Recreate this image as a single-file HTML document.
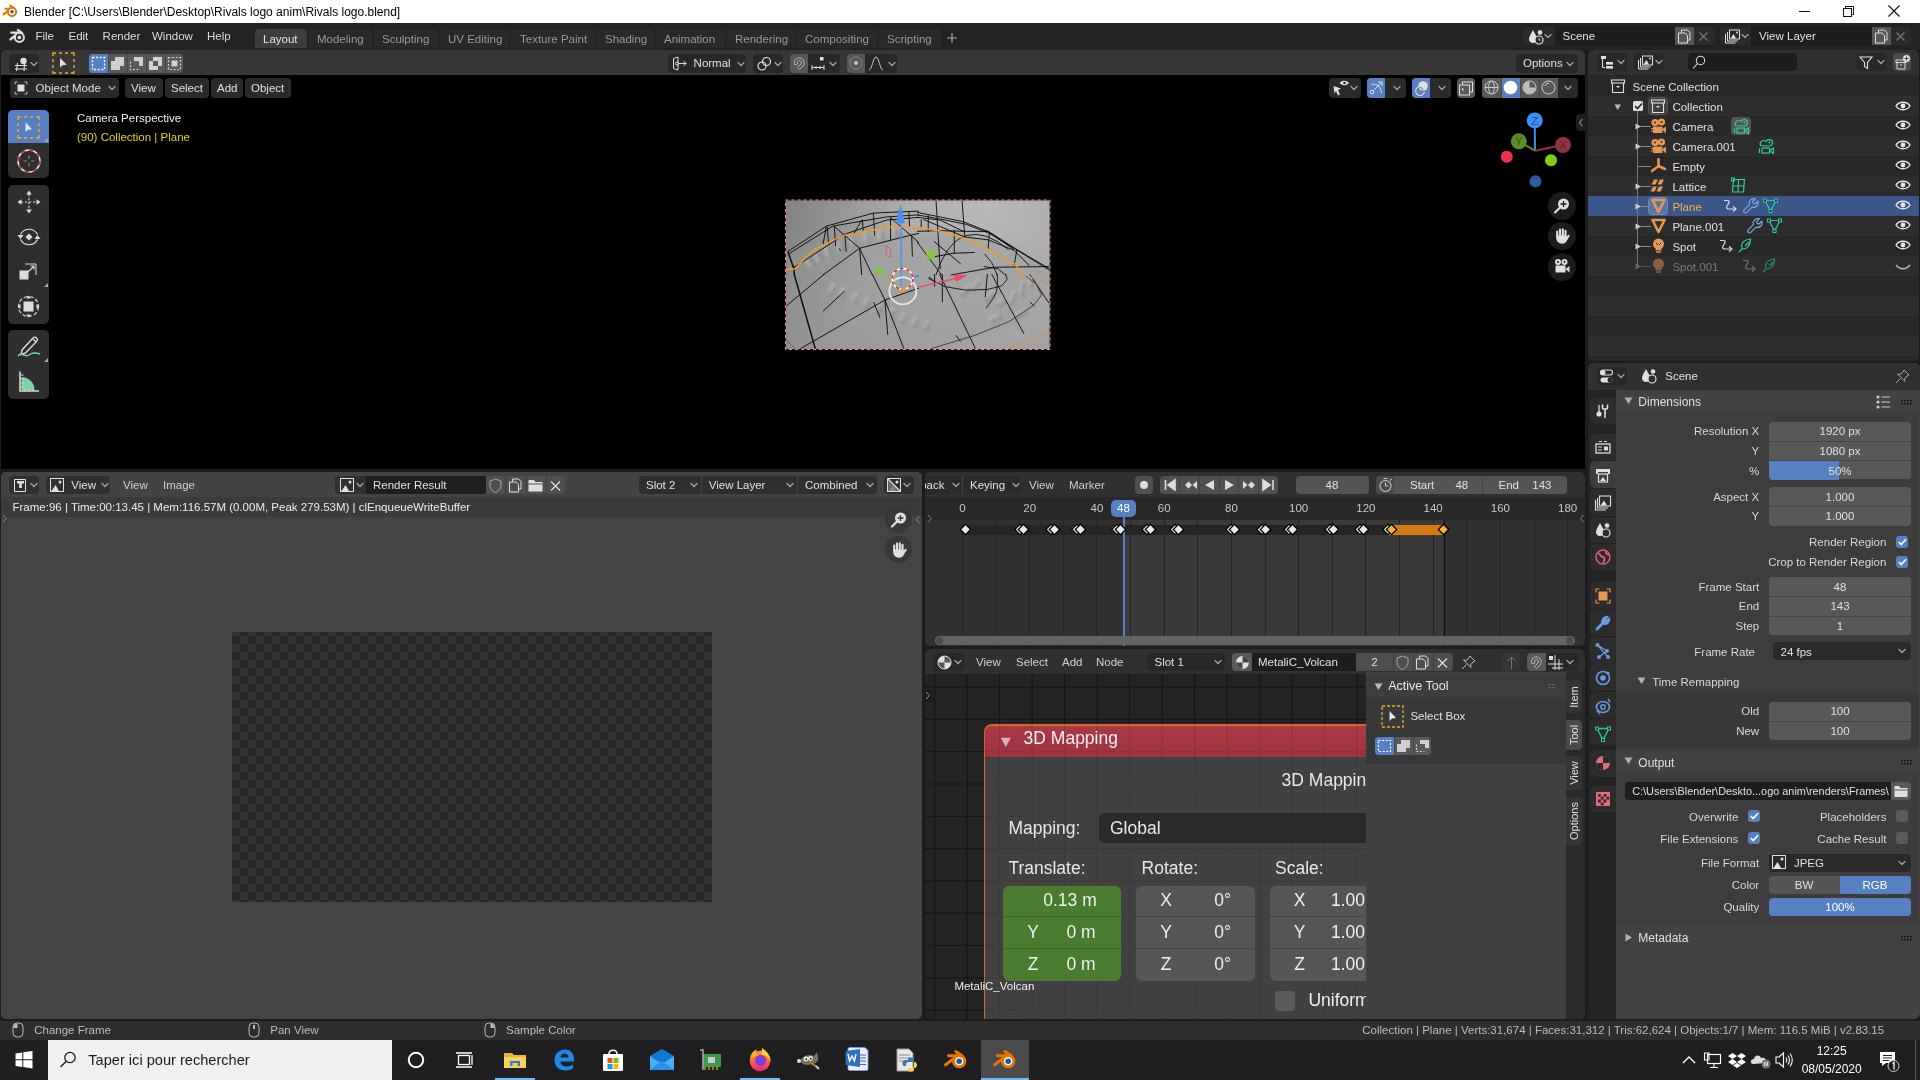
<!DOCTYPE html>
<html><head><meta charset="utf-8">
<style>
*{box-sizing:border-box}
html,body{margin:0;padding:0}
body{width:1920px;height:1080px;position:relative;overflow:hidden;background:#1c1c1c;font-family:"Liberation Sans",sans-serif;font-size:11.5px;color:#d8d8d8}
.a{position:absolute}
.t{position:absolute;white-space:nowrap}
svg{position:absolute;overflow:visible}
</style></head><body>
<div id="root" style="position:absolute;left:0;top:0;width:1920px;height:1080px;overflow:hidden;will-change:transform">
<!-- sec_rest -->
<div class="a" style="left:1px;top:50px;width:1584px;height:25px;background:#303030;border-radius:5px 5px 0 0;"></div>
<div class="a" style="left:1px;top:75px;width:1584px;height:394px;background:#000;"></div>
<div class="a" style="left:1px;top:472px;width:921px;height:547px;background:#444444;border-radius:5px;"></div>
<div class="a" style="left:925px;top:472px;width:660px;height:174px;background:#333;border-radius:5px;"></div>
<div class="a" style="left:925px;top:649px;width:660px;height:371px;background:#1d1d1d;border-radius:5px;"></div>
<div class="a" style="left:1588px;top:50px;width:331px;height:311px;background:#282828;border-radius:5px;"></div>
<div class="a" style="left:1588px;top:364px;width:331px;height:655px;background:#424242;border-radius:5px;"></div>
<div class="a" style="left:0px;top:1040px;width:1920px;height:40px;background:#1b1b1b;"></div>
<!-- sec_top -->
<div class="a" style="left:0px;top:0px;width:1920px;height:23px;background:#fff;"></div>
<svg style="left:0px;top:0px;" width="30" height="50" viewBox="0 0 30 50"><g stroke="#ea7600" stroke-linecap="round" fill="none"><path d="M10.2 5.6 L14.2 8.3" stroke-width="2.1"/><path d="M5.4 8.7 H11" stroke-width="2.1"/><path d="M3.5 14.4 L8.8 10.3" stroke-width="2.3"/><circle cx="12" cy="11.8" r="4.1" stroke-width="2.1"/></g><circle cx="12" cy="11.8" r="3" fill="#fff"/><circle cx="12" cy="11.8" r="1.7" fill="#265787"/></svg>
<div class="t" style="left:24px;top:4.73px;font-size:12px;line-height:15px;color:#000;">Blender [C:\Users\Blender\Desktop\Rivals logo anim\Rivals logo.blend]</div>
<div class="a" style="left:1799px;top:11px;width:11px;height:1px;background:#111;"></div>
<svg style="left:1842px;top:4px;" width="14" height="14" viewBox="0 0 14 14"><rect x="1.5" y="4.5" width="8" height="8" fill="none" stroke="#111" stroke-width="1"/><path d="M3.5 4.5 V2.5 H11.5 V10.5 H9.5" fill="none" stroke="#111" stroke-width="1"/></svg>
<svg style="left:1887px;top:4px;" width="14" height="14" viewBox="0 0 14 14"><path d="M1.5 1.5 L12.5 12.5 M12.5 1.5 L1.5 12.5" stroke="#111" stroke-width="1.1"/></svg>
<div class="a" style="left:0px;top:23px;width:1920px;height:27px;background:#232323;"></div>
<svg style="left:0px;top:0px;" width="30" height="50" viewBox="0 0 30 50"><g stroke="#e0e0e0" stroke-linecap="round" fill="none"><path d="M17.8 29.8 L22.2 33.2" stroke-width="2.2"/><path d="M11.3 32.7 H18" stroke-width="2.2"/><path d="M10.6 39.3 L15.6 35.2" stroke-width="2.4"/><circle cx="19.4" cy="37.4" r="4.4" stroke-width="2.2"/></g><circle cx="19.4" cy="37.4" r="3.3" fill="#232323"/><circle cx="19.4" cy="37.4" r="1.9" fill="#e0e0e0"/></svg>
<div class="t" style="left:35.4px;top:29.40px;font-size:11.5px;line-height:14px;color:#dcdcdc;">File</div>
<div class="t" style="left:68.5px;top:29.40px;font-size:11.5px;line-height:14px;color:#dcdcdc;">Edit</div>
<div class="t" style="left:102.6px;top:29.40px;font-size:11.5px;line-height:14px;color:#dcdcdc;">Render</div>
<div class="t" style="left:152px;top:29.40px;font-size:11.5px;line-height:14px;color:#dcdcdc;">Window</div>
<div class="t" style="left:207px;top:29.40px;font-size:11.5px;line-height:14px;color:#dcdcdc;">Help</div>
<div class="a" style="left:255px;top:29px;width:52px;height:19px;background:#3d3d3d;border-radius:4px 4px 0 0;"></div>
<div class="t" style="left:263px;top:32.20px;font-size:11.5px;line-height:14px;color:#e6e6e6;">Layout</div>
<div class="a" style="left:309px;top:29px;width:63px;height:19px;background:#292929;border-radius:4px 4px 0 0;"></div>
<div class="t" style="left:317px;top:32.20px;font-size:11.5px;line-height:14px;color:#9a9a9a;">Modeling</div>
<div class="a" style="left:374px;top:29px;width:64px;height:19px;background:#292929;border-radius:4px 4px 0 0;"></div>
<div class="t" style="left:382px;top:32.20px;font-size:11.5px;line-height:14px;color:#9a9a9a;">Sculpting</div>
<div class="a" style="left:440px;top:29px;width:69px;height:19px;background:#292929;border-radius:4px 4px 0 0;"></div>
<div class="t" style="left:448px;top:32.20px;font-size:11.5px;line-height:14px;color:#9a9a9a;">UV Editing</div>
<div class="a" style="left:511px;top:29px;width:83.5px;height:19px;background:#292929;border-radius:4px 4px 0 0;"></div>
<div class="t" style="left:520px;top:32.20px;font-size:11.5px;line-height:14px;color:#9a9a9a;">Texture Paint</div>
<div class="a" style="left:596.75px;top:29px;width:57.0px;height:19px;background:#292929;border-radius:4px 4px 0 0;"></div>
<div class="t" style="left:605px;top:32.20px;font-size:11.5px;line-height:14px;color:#9a9a9a;">Shading</div>
<div class="a" style="left:656px;top:29px;width:68.5px;height:19px;background:#292929;border-radius:4px 4px 0 0;"></div>
<div class="t" style="left:664px;top:32.20px;font-size:11.5px;line-height:14px;color:#9a9a9a;">Animation</div>
<div class="a" style="left:727px;top:29px;width:67.5px;height:19px;background:#292929;border-radius:4px 4px 0 0;"></div>
<div class="t" style="left:735px;top:32.20px;font-size:11.5px;line-height:14px;color:#9a9a9a;">Rendering</div>
<div class="a" style="left:797px;top:29px;width:79.75px;height:19px;background:#292929;border-radius:4px 4px 0 0;"></div>
<div class="t" style="left:805px;top:32.20px;font-size:11.5px;line-height:14px;color:#9a9a9a;">Compositing</div>
<div class="a" style="left:879px;top:29px;width:61.75px;height:19px;background:#292929;border-radius:4px 4px 0 0;"></div>
<div class="t" style="left:887px;top:32.20px;font-size:11.5px;line-height:14px;color:#9a9a9a;">Scripting</div>
<svg style="left:946px;top:32px;" width="12" height="12" viewBox="0 0 12 12"><path d="M6 1 V11 M1 6 H11" stroke="#aaa" stroke-width="1.2"/></svg>
<!-- sec_view3d -->
<div class="a" style="left:1px;top:50px;width:1584px;height:25px;background:#373737;border-radius:6px 6px 0 0;"></div>
<div class="a" style="left:9px;top:54px;width:30px;height:18.5px;background:#282828;border-radius:4px;"></div>
<svg style="left:13px;top:56px;" width="18" height="15" viewBox="0 0 18 15"><path d="M2 9.5 H14 M2 13 H14 M4.5 7 L3.5 15 M11.5 8 L11 15" stroke="#e0e0e0" stroke-width="1.1" fill="none"/><circle cx="10.5" cy="5" r="3.2" fill="#e0e0e0"/></svg>
<svg style="left:30px;top:61px;" width="8" height="6" viewBox="0 0 8 6"><path d="M1 1.5 L4 4.5 L7 1.5" fill="none" stroke="#a0a0a0" stroke-width="1.4" stroke-linecap="round" stroke-linejoin="round"/></svg>
<svg style="left:52px;top:52px;" width="23" height="22" viewBox="0 0 23 22"><path d="M1 4 V1 H4 M7 1 H10 M13 1 H16 M19 1 H22 V4 M22 7 V10 M22 13 V16 M22 19 V21 H19 M16 21 H13 M10 21 H7 M4 21 H1 V19 M1 16 V13 M1 10 V7" fill="none" stroke="#f5a623" stroke-width="1.4"/><path d="M8 6 V15.5 L10.5 13.3 L14.8 12.8 Z" fill="#e0e0e0"/></svg>
<div class="a" style="left:89px;top:54px;width:94px;height:18.5px;background:#595959;border-radius:4px;"></div>
<div class="a" style="left:89px;top:54px;width:19px;height:18.5px;background:#5680c2;border-radius:4px 0 0 4px;"></div>
<div class="a" style="left:107.5px;top:54px;width:1px;height:18.5px;background:#484848;"></div>
<div class="a" style="left:126.5px;top:54px;width:1px;height:18.5px;background:#484848;"></div>
<div class="a" style="left:145.5px;top:54px;width:1px;height:18.5px;background:#484848;"></div>
<div class="a" style="left:164.5px;top:54px;width:1px;height:18.5px;background:#484848;"></div>
<svg style="left:90px;top:55px;" width="17" height="17" viewBox="0 0 17 17"><rect x="2.5" y="2.5" width="12" height="12" fill="none" stroke="#fff" stroke-width="1.3" stroke-dasharray="2 1.6"/></svg>
<svg style="left:109px;top:55px;" width="17" height="17" viewBox="0 0 17 17"><path d="M6 2 H15 V11 H11 V15 H2 V6 H6 Z" fill="#d0d0d0"/></svg>
<svg style="left:128px;top:55px;" width="17" height="17" viewBox="0 0 17 17"><path d="M6 2 H15 V11 H11 V6 H6 Z" fill="#d0d0d0"/><path d="M2.5 6.5 V14.5 H10.5" fill="none" stroke="#d0d0d0" stroke-width="1.2" stroke-dasharray="2 1.5"/></svg>
<svg style="left:147px;top:55px;" width="17" height="17" viewBox="0 0 17 17"><path d="M6 2 H15 V11 H11 V6 H6 Z M2 6 H6 V11 H11 V15 H2 Z" fill="#d0d0d0"/></svg>
<svg style="left:166px;top:55px;" width="17" height="17" viewBox="0 0 17 17"><rect x="2.5" y="2.5" width="12" height="12" fill="none" stroke="#d0d0d0" stroke-width="1.2" stroke-dasharray="2 1.6"/><rect x="5.5" y="5.5" width="6" height="6" fill="#d0d0d0"/></svg>
<div class="a" style="left:668px;top:54px;width:78px;height:18.5px;background:#282828;border-radius:4px;"></div>
<svg style="left:671px;top:56px;" width="20" height="15" viewBox="0 0 20 15"><path d="M2.5 2.5 L7 1 V14 L2.5 12.5 Z" fill="none" stroke="#e0e0e0" stroke-width="1"/><circle cx="6" cy="7.5" r="1.6" fill="none" stroke="#e0e0e0" stroke-width="1"/><path d="M7.5 7.5 H15 M12.5 5 L15 7.5 L12.5 10" fill="none" stroke="#e0e0e0" stroke-width="1"/></svg>
<div class="t" style="left:693.6px;top:56.20px;font-size:11.5px;line-height:14px;color:#e0e0e0;">Normal</div>
<svg style="left:737px;top:61px;" width="8" height="6" viewBox="0 0 8 6"><path d="M1 1.5 L4 4.5 L7 1.5" fill="none" stroke="#a0a0a0" stroke-width="1.4" stroke-linecap="round" stroke-linejoin="round"/></svg>
<div class="a" style="left:753px;top:54px;width:30px;height:18.5px;background:#282828;border-radius:4px;"></div>
<svg style="left:756px;top:55px;" width="18" height="17" viewBox="0 0 18 17"><circle cx="6" cy="11" r="4" fill="none" stroke="#e0e0e0" stroke-width="1.2"/><circle cx="10.5" cy="6.5" r="4" fill="none" stroke="#e0e0e0" stroke-width="1.2"/></svg>
<svg style="left:774px;top:61px;" width="8" height="6" viewBox="0 0 8 6"><path d="M1 1.5 L4 4.5 L7 1.5" fill="none" stroke="#a0a0a0" stroke-width="1.4" stroke-linecap="round" stroke-linejoin="round"/></svg>
<div class="a" style="left:790px;top:54px;width:50px;height:18.5px;background:#282828;border-radius:4px;"></div>
<div class="a" style="left:790px;top:54px;width:18px;height:18.5px;background:#595959;border-radius:4px 0 0 4px;"></div>
<svg style="left:792px;top:56px;" width="15" height="15" viewBox="0 0 15 15"><path d="M3 9 C1 5 4 1.5 8 2 C12 2.5 13.5 7 11 10 L7.5 13.5 L5.5 11.5 L9 8 C10 6.5 9 4.5 7.5 4.5 C5.5 4.5 5 6.5 5.8 7.8 Z" fill="none" stroke="#b8b8b8" stroke-width="1"/></svg>
<svg style="left:810px;top:55px;" width="16" height="17" viewBox="0 0 16 17"><rect x="10" y="2" width="3.5" height="3.5" fill="#e0e0e0"/><path d="M2 10 V15 M14 10 V15 M2 12.5 H14 M6 11 V14 M10 11 V14" stroke="#e0e0e0" stroke-width="1" fill="none"/></svg>
<svg style="left:829px;top:61px;" width="8" height="6" viewBox="0 0 8 6"><path d="M1 1.5 L4 4.5 L7 1.5" fill="none" stroke="#a0a0a0" stroke-width="1.4" stroke-linecap="round" stroke-linejoin="round"/></svg>
<div class="a" style="left:847px;top:54px;width:50px;height:18.5px;background:#282828;border-radius:4px;"></div>
<div class="a" style="left:847px;top:54px;width:18px;height:18.5px;background:#595959;border-radius:4px 0 0 4px;"></div>
<svg style="left:848px;top:55px;" width="16" height="16" viewBox="0 0 16 16"><circle cx="8" cy="8" r="6" fill="none" stroke="#888" stroke-width="0.9"/><circle cx="8" cy="8" r="2" fill="#c8c8c8"/></svg>
<svg style="left:868px;top:55px;" width="16" height="17" viewBox="0 0 16 17"><path d="M1 15 C4 15 5 2 8 2 C11 2 12 15 15 15" fill="none" stroke="#c8c8c8" stroke-width="1"/></svg>
<svg style="left:888px;top:61px;" width="8" height="6" viewBox="0 0 8 6"><path d="M1 1.5 L4 4.5 L7 1.5" fill="none" stroke="#a0a0a0" stroke-width="1.4" stroke-linecap="round" stroke-linejoin="round"/></svg>
<div class="a" style="left:1516px;top:54px;width:61.5px;height:18.5px;background:#282828;border-radius:4px;"></div>
<div class="t" style="left:1523px;top:56.20px;font-size:11.5px;line-height:14px;color:#e0e0e0;">Options</div>
<svg style="left:1566px;top:61px;" width="8" height="6" viewBox="0 0 8 6"><path d="M1 1.5 L4 4.5 L7 1.5" fill="none" stroke="#a0a0a0" stroke-width="1.4" stroke-linecap="round" stroke-linejoin="round"/></svg>
<div class="a" style="left:1px;top:75px;width:1584px;height:394px;background:#000;"></div>
<div class="a" style="left:9.5px;top:78px;width:109.25px;height:19.5px;background:#2a2a2a;border-radius:4px;"></div>
<svg style="left:13px;top:80px;" width="18" height="16" viewBox="0 0 18 16"><path d="M2 4.5 V2 H4.5 M11.5 2 H14 V4.5 M14 11.5 V14 H11.5 M4.5 14 H2 V11.5" fill="none" stroke="#bbb" stroke-width="1"/><rect x="4.5" y="4.5" width="7" height="7" fill="#e0e0e0"/></svg>
<div class="t" style="left:35.6px;top:81.20px;font-size:11.5px;line-height:14px;color:#e0e0e0;">Object Mode</div>
<svg style="left:108px;top:85px;" width="8" height="6" viewBox="0 0 8 6"><path d="M1 1.5 L4 4.5 L7 1.5" fill="none" stroke="#a0a0a0" stroke-width="1.4" stroke-linecap="round" stroke-linejoin="round"/></svg>
<div class="a" style="left:125px;top:78px;width:37.5px;height:19.5px;background:#2a2a2a;border-radius:4px;"></div>
<div class="t" style="left:131px;top:81.20px;font-size:11.5px;line-height:14px;color:#e0e0e0;">View</div>
<div class="a" style="left:165px;top:78px;width:43.75px;height:19.5px;background:#2a2a2a;border-radius:4px;"></div>
<div class="t" style="left:171px;top:81.20px;font-size:11.5px;line-height:14px;color:#e0e0e0;">Select</div>
<div class="a" style="left:211px;top:78px;width:31.5px;height:19.5px;background:#2a2a2a;border-radius:4px;"></div>
<div class="t" style="left:217px;top:81.20px;font-size:11.5px;line-height:14px;color:#e0e0e0;">Add</div>
<div class="a" style="left:245px;top:78px;width:45.75px;height:19.5px;background:#2a2a2a;border-radius:4px;"></div>
<div class="t" style="left:251px;top:81.20px;font-size:11.5px;line-height:14px;color:#e0e0e0;">Object</div>
<div class="a" style="left:1329px;top:78px;width:32px;height:19.5px;background:#2a2a2a;border-radius:4px;"></div>
<svg style="left:1332px;top:80px;" width="18" height="16" viewBox="0 0 18 16"><path d="M8 2.5 C10.5 0 14.5 0 17 3 C14.5 6 10.5 6 8 3.5 Z" fill="#e0e0e0"/><circle cx="12.5" cy="3" r="1.3" fill="#2a2a2a"/><path d="M1.5 6 L9 8.5 L6 10 L8 14.5 L6 15.5 L4 11 L2.5 13.5 Z" fill="#e0e0e0"/></svg>
<svg style="left:1350px;top:85px;" width="8" height="6" viewBox="0 0 8 6"><path d="M1 1.5 L4 4.5 L7 1.5" fill="none" stroke="#a0a0a0" stroke-width="1.4" stroke-linecap="round" stroke-linejoin="round"/></svg>
<div class="a" style="left:1367px;top:78px;width:39px;height:19.5px;background:#2a2a2a;border-radius:4px;"></div>
<div class="a" style="left:1367px;top:78px;width:18px;height:19.5px;background:#5680c2;border-radius:4px 0 0 4px;"></div>
<svg style="left:1368px;top:79px;" width="17" height="17" viewBox="0 0 17 17"><path d="M3.5 5.5 C9 4 13 8 13.5 14" fill="none" stroke="#e0e0e0" stroke-width="1"/><circle cx="4" cy="13" r="1.8" fill="none" stroke="#e0e0e0" stroke-width="1"/><path d="M5.5 11.5 L14 3 M10 3 H14 V7" fill="none" stroke="#e0e0e0" stroke-width="1"/></svg>
<svg style="left:1393px;top:85px;" width="8" height="6" viewBox="0 0 8 6"><path d="M1 1.5 L4 4.5 L7 1.5" fill="none" stroke="#a0a0a0" stroke-width="1.4" stroke-linecap="round" stroke-linejoin="round"/></svg>
<div class="a" style="left:1412px;top:78px;width:39px;height:19.5px;background:#2a2a2a;border-radius:4px;"></div>
<div class="a" style="left:1412px;top:78px;width:18px;height:19.5px;background:#5680c2;border-radius:4px 0 0 4px;"></div>
<svg style="left:1413px;top:79px;" width="17" height="17" viewBox="0 0 17 17"><circle cx="10" cy="7" r="4.8" fill="#e0e0e0"/><path d="M5 8 A4.5 4.5 0 1 0 11.5 13" fill="none" stroke="#e0e0e0" stroke-width="1.1"/><circle cx="7.5" cy="10.5" r="2" fill="none" stroke="#5680c2" stroke-width="1"/></svg>
<svg style="left:1438px;top:85px;" width="8" height="6" viewBox="0 0 8 6"><path d="M1 1.5 L4 4.5 L7 1.5" fill="none" stroke="#a0a0a0" stroke-width="1.4" stroke-linecap="round" stroke-linejoin="round"/></svg>
<div class="a" style="left:1456.7px;top:78px;width:18.700000000000045px;height:19.5px;background:#595959;border-radius:4px;"></div>
<svg style="left:1458px;top:80px;" width="16" height="16" viewBox="0 0 16 16"><rect x="4.5" y="2" width="10" height="10" fill="none" stroke="#e0e0e0" stroke-width="1"/><rect x="1.5" y="5" width="10" height="10" fill="#595959" stroke="#e0e0e0" stroke-width="1"/><path d="M4.5 8 V10 H6" stroke="#e0e0e0" stroke-width="1" fill="none"/></svg>
<div class="a" style="left:1482px;top:78px;width:96px;height:19.5px;background:#2a2a2a;border-radius:4px;"></div>
<div class="a" style="left:1482px;top:78px;width:76px;height:19.5px;background:#595959;border-radius:4px 0 0 4px;"></div>
<div class="a" style="left:1501px;top:78px;width:18.5px;height:19.5px;background:#5680c2;"></div>
<div class="a" style="left:1500.5px;top:78px;width:1px;height:19.5px;background:#4a4a4a;"></div>
<div class="a" style="left:1519.5px;top:78px;width:1px;height:19.5px;background:#4a4a4a;"></div>
<div class="a" style="left:1538.5px;top:78px;width:1px;height:19.5px;background:#4a4a4a;"></div>
<svg style="left:1482px;top:79px;" width="19" height="17" viewBox="0 0 19 17"><circle cx="9.5" cy="8.5" r="6.5" fill="none" stroke="#ccc" stroke-width="1"/><ellipse cx="9.5" cy="8.5" rx="2.8" ry="6.5" fill="none" stroke="#ccc" stroke-width="1"/><path d="M3 8.5 H16" stroke="#ccc" stroke-width="1"/></svg>
<svg style="left:1501px;top:79px;" width="19" height="17" viewBox="0 0 19 17"><circle cx="9.5" cy="8.5" r="6.8" fill="#fff"/></svg>
<svg style="left:1520px;top:79px;" width="19" height="17" viewBox="0 0 19 17"><circle cx="9.5" cy="8.5" r="6.5" fill="none" stroke="#ccc" stroke-width="1"/><path d="M9.5 2 V8.5 H16 A6.5 6.5 0 0 1 9.5 15 A6.5 6.5 0 0 1 3 8.5 A6.5 6.5 0 0 1 9.5 2Z" fill="#bbb"/></svg>
<svg style="left:1539px;top:79px;" width="19" height="17" viewBox="0 0 19 17"><circle cx="9.5" cy="8.5" r="6.5" fill="none" stroke="#ccc" stroke-width="1"/><path d="M6 7 A4 4 0 0 1 10 4" fill="none" stroke="#ccc" stroke-width="1"/></svg>
<svg style="left:1564px;top:85px;" width="8" height="6" viewBox="0 0 8 6"><path d="M1 1.5 L4 4.5 L7 1.5" fill="none" stroke="#a0a0a0" stroke-width="1.4" stroke-linecap="round" stroke-linejoin="round"/></svg>
<div class="t" style="left:77px;top:110.90px;font-size:11.5px;line-height:14px;color:#f0f0f0;">Camera Perspective</div>
<div class="t" style="left:77px;top:130.20px;font-size:11.5px;line-height:14px;color:#e8d500;">(90) Collection | Plane</div>
<div class="a" style="left:8px;top:110px;width:41px;height:68px;background:#2e2e2e;border-radius:5px;"></div>
<div class="a" style="left:8px;top:185px;width:41px;height:139px;background:#2e2e2e;border-radius:5px;"></div>
<div class="a" style="left:8px;top:330px;width:41px;height:69px;background:#2e2e2e;border-radius:5px;"></div>
<div class="a" style="left:8px;top:110px;width:41px;height:33px;background:#5680c2;border-radius:5px 5px 0 0;"></div>
<svg style="left:17px;top:116px;" width="23" height="23" viewBox="0 0 23 23"><path d="M1 4 V1 H4 M7 1 H10 M13 1 H16 M19 1 H22 V4 M22 7 V10 M22 13 V16 M22 19 V22 H19 M16 22 H13 M10 22 H7 M4 22 H1 V19 M1 16 V13 M1 10 V7" fill="none" stroke="#f5a623" stroke-width="1.5"/><path d="M8.5 6.3 V16 L11 13.8 L15 13.2 Z" fill="#e8e8e8"/></svg>
<svg style="left:44px;top:138px;" width="4" height="4" viewBox="0 0 4 4"><path d="M4 0 V4 H0 Z" fill="#aaa"/></svg>
<svg style="left:16.5px;top:148.5px;" width="24" height="24" viewBox="0 0 24 24"><circle cx="12" cy="12" r="11" fill="none" stroke="#e8e8e8" stroke-width="1.5"/><circle cx="12" cy="12" r="11" fill="none" stroke="#c02828" stroke-width="1.6" stroke-dasharray="4.3 4.3"/><path d="M12 6.5 V10 M12 14 V17.5 M6.5 12 H10 M14 12 H17.5" stroke="#8a8a8a" stroke-width="1.2"/></svg>
<svg style="left:16.5px;top:190px;" width="24" height="24" viewBox="0 0 24 24"><path d="M12 4 V20 M4 12 H20" stroke="#ddd" stroke-width="1.1" stroke-dasharray="2.2 1.8"/><path d="M12 0.5 L9.2 4.5 H14.8 Z M12 23.5 L9.2 19.5 H14.8 Z M0.5 12 L4.5 9.2 V14.8 Z M23.5 12 L19.5 9.2 V14.8 Z" fill="#ddd"/></svg>
<svg style="left:16.5px;top:224.5px;" width="24" height="24" viewBox="0 0 24 24"><path d="M3.5 9.5 A9.5 9.5 0 0 1 20.5 9.5 M20.5 14.5 A9.5 9.5 0 0 1 3.5 14.5" fill="none" stroke="#ddd" stroke-width="1.2"/><path d="M12 8.5 L15.5 12 L12 15.5 L8.5 12 Z" fill="#ddd"/><path d="M0.5 10 H6.5 L3.5 14 Z M23.5 14 H17.5 L20.5 10 Z" fill="#ddd"/></svg>
<svg style="left:17px;top:261px;" width="22" height="22" viewBox="0 0 22 22"><rect x="2.5" y="9.5" width="9" height="9" fill="#ddd"/><path d="M8 3 H19 V14" fill="none" stroke="#ddd" stroke-width="1"/><path d="M11 11 L17 5 M13.5 5 H17 V8.5" fill="none" stroke="#ddd" stroke-width="1.2"/></svg>
<svg style="left:44px;top:283px;" width="4" height="4" viewBox="0 0 4 4"><path d="M4 0 V4 H0 Z" fill="#aaa"/></svg>
<svg style="left:17px;top:294.5px;" width="23" height="23" viewBox="0 0 23 23"><circle cx="11.5" cy="11.5" r="10" fill="none" stroke="#ddd" stroke-width="1.1" stroke-dasharray="4 2"/><rect x="6.5" y="6.5" width="10" height="10" fill="#ddd"/><path d="M11.5 0.5 L9 3.5 H14 Z M11.5 22.5 L9 19.5 H14 Z M0.5 11.5 L3.5 9 V14 Z M22.5 11.5 L19.5 9 V14 Z" fill="#ddd"/></svg>
<svg style="left:15.5px;top:334px;" width="26" height="26" viewBox="0 0 26 26"><path d="M6 16 L17 4 C18 3 19.5 3 20.5 4 C21.5 5 21.5 6.5 20.5 7.5 L9.5 19 L5 20.5 Z" fill="none" stroke="#ddd" stroke-width="1.4"/><path d="M17 5 L20 8" stroke="#ddd" stroke-width="1.2"/><path d="M2 22 C6 17 9 24 13 21 C16 19 18 18 24 20" fill="none" stroke="#7dd3a8" stroke-width="1.5"/></svg>
<svg style="left:44px;top:358px;" width="4" height="4" viewBox="0 0 4 4"><path d="M4 0 V4 H0 Z" fill="#aaa"/></svg>
<svg style="left:17px;top:370px;" width="23" height="23" viewBox="0 0 23 23"><path d="M3 1.5 V21 H22" fill="none" stroke="#ddd" stroke-width="1.6"/><path d="M4.5 20 V7 A13 13 0 0 1 17.5 20 Z" fill="#7dd3a8"/><path d="M4 17 H6.5 M4 13 H6.5 M4 9 H6.5 M4 5 H6.5 M8 19 V21 M12 19 V21 M16 19 V21" stroke="#ddd" stroke-width="1"/></svg>
<svg style="left:0px;top:0px;pointer-events:none" width="1920" height="1080" viewBox="0 0 1920 1080"><line x1="1535" y1="150.7" x2="1534.7" y2="120.4" stroke="#3d8ff5" stroke-width="2"/><line x1="1535" y1="150.7" x2="1518.8" y2="141.3" stroke="#5f8a28" stroke-width="2"/><line x1="1535" y1="150.7" x2="1563" y2="145" stroke="#8e3340" stroke-width="2"/><circle cx="1506.8" cy="156.7" r="6" fill="#f0304e"/><circle cx="1551" cy="160.3" r="6" fill="#7ed00e"/><circle cx="1535.5" cy="181.2" r="6" fill="#2c5c9b"/><circle cx="1518.8" cy="141.3" r="8" fill="#5f8a28"/><circle cx="1563" cy="145" r="8" fill="#8e3340"/><circle cx="1534.7" cy="120.4" r="8" fill="#3d8ff5"/><text x="1534.7" y="124.5" font-size="11" text-anchor="middle" fill="#1d4f8f" font-family="Liberation Sans">Z</text><text x="1518.8" y="145.4" font-size="11" text-anchor="middle" fill="#3d5a18" font-family="Liberation Sans">Y</text><text x="1563" y="149.1" font-size="11" text-anchor="middle" fill="#5e1f28" font-family="Liberation Sans">X</text></svg>
<div class="a" style="left:1548px;top:191.5px;width:28px;height:28px;background:#1c1c1c;border-radius:14px;"></div>
<div class="a" style="left:1548px;top:222px;width:28px;height:28px;background:#1c1c1c;border-radius:14px;"></div>
<div class="a" style="left:1548px;top:252.60000000000002px;width:28px;height:28px;background:#1c1c1c;border-radius:14px;"></div>
<svg style="left:1552px;top:196px;" width="20" height="20" viewBox="0 0 20 20"><circle cx="11.5" cy="8" r="5.5" fill="#e0e0e0"/><path d="M11.5 5 V11 M8.5 8 H14.5" stroke="#1c1c1c" stroke-width="1.3"/><path d="M7.5 12 L3 16.5" stroke="#e0e0e0" stroke-width="2.2" stroke-linecap="round"/></svg>
<svg style="left:1552px;top:226px;" width="20" height="20" viewBox="0 0 20 20"><path d="M5.2 10.5 V5.5 M8 10 V3.5 M10.8 10 V3.2 M13.5 10.5 V4.8" stroke="#e0e0e0" stroke-width="2.1" stroke-linecap="round"/><path d="M4.2 10 C4 13 4.5 16.5 8.5 17.5 C12 18.2 14 16.5 15 14.5 L17.6 10 C18 9.2 17 8.4 16.2 9 L14.5 10.8 V9.5 H4.2 Z" fill="#e0e0e0"/></svg>
<svg style="left:1552px;top:257px;" width="20" height="20" viewBox="0 0 20 20"><circle cx="6" cy="5" r="3" fill="#e0e0e0"/><circle cx="12.5" cy="5" r="3" fill="#e0e0e0"/><rect x="3.5" y="8.5" width="10" height="7" fill="#e0e0e0"/><path d="M13.5 12 L17.5 9 V15.5 Z" fill="#e0e0e0"/><circle cx="6" cy="5" r="1" fill="#1c1c1c"/><circle cx="12.5" cy="5" r="1" fill="#1c1c1c"/></svg>
<div class="a" style="left:1576px;top:114px;width:9px;height:17px;background:#1e1e1e;border-radius:4px 0 0 4px;"></div>
<svg style="left:1578px;top:118px;" width="6" height="9" viewBox="0 0 6 9"><path d="M4.5 1 L1.5 4.5 L4.5 8" fill="none" stroke="#999" stroke-width="1.1"/></svg>
<!-- sec_cam -->
<svg style="left:0px;top:0px;" width="1920" height="1080" viewBox="0 0 1920 1080"><defs>
<radialGradient id="bgg" cx="985" cy="205" r="260" gradientUnits="userSpaceOnUse">
<stop offset="0" stop-color="#b9b9b9"/><stop offset="0.5" stop-color="#a6a6a6"/><stop offset="1" stop-color="#8e8e8e"/></radialGradient>
<linearGradient id="lg2" x1="785" y1="200" x2="880" y2="260" gradientUnits="userSpaceOnUse"><stop offset="0" stop-color="#000" stop-opacity="0.16"/><stop offset="1" stop-color="#000" stop-opacity="0"/></linearGradient>
<clipPath id="fr"><rect x="785.5" y="200" width="264.5" height="149.5"/></clipPath>
<filter id="bl" x="-50%" y="-50%" width="200%" height="200%"><feGaussianBlur stdDeviation="3"/></filter>
<filter id="bl2" x="-50%" y="-50%" width="200%" height="200%"><feGaussianBlur stdDeviation="1.1"/></filter>
</defs><rect x="785.5" y="200" width="264.5" height="149.5" fill="url(#bgg)"/><rect x="785.5" y="200" width="264.5" height="149.5" fill="url(#lg2)"/><g clip-path="url(#fr)"><path d="M785.0 339.45 L787.81 252.48 C 840 240 900 228 960 232 C 1010 236 1045 262 1050 280 L 1041.56 295.11 C 1040 320 1000 335 950 342 L 870 350 L 785 350 Z" fill="#9a9a9a" opacity="0.45" filter="url(#bl)"/><g filter="url(#bl2)"><rect x="806.85" y="257.6" width="4.5" height="9" rx="1.5" transform="rotate(-35 810 263)" fill="#d2d2d2" opacity="0.55"/><rect x="808.65" y="259.4" width="4.5" height="9" rx="1.5" transform="rotate(-35 810 263)" fill="#5e5e5e" opacity="0.5"/><rect x="807.75" y="258.5" width="4.5" height="9" rx="1.5" transform="rotate(-35 810 263)" fill="#a8a8a8" opacity="0.7"/><rect x="814.85" y="252.6" width="4.5" height="9" rx="1.5" transform="rotate(-31 818 258)" fill="#d2d2d2" opacity="0.55"/><rect x="816.65" y="254.4" width="4.5" height="9" rx="1.5" transform="rotate(-31 818 258)" fill="#5e5e5e" opacity="0.5"/><rect x="815.75" y="253.5" width="4.5" height="9" rx="1.5" transform="rotate(-31 818 258)" fill="#a8a8a8" opacity="0.7"/><rect x="824.85" y="246.6" width="4.5" height="9" rx="1.5" transform="rotate(-27 828 252)" fill="#d2d2d2" opacity="0.55"/><rect x="826.65" y="248.4" width="4.5" height="9" rx="1.5" transform="rotate(-27 828 252)" fill="#5e5e5e" opacity="0.5"/><rect x="825.75" y="247.5" width="4.5" height="9" rx="1.5" transform="rotate(-27 828 252)" fill="#a8a8a8" opacity="0.7"/><rect x="836.85" y="241.6" width="4.5" height="9" rx="1.5" transform="rotate(-23 840 247)" fill="#d2d2d2" opacity="0.55"/><rect x="838.65" y="243.4" width="4.5" height="9" rx="1.5" transform="rotate(-23 840 247)" fill="#5e5e5e" opacity="0.5"/><rect x="837.75" y="242.5" width="4.5" height="9" rx="1.5" transform="rotate(-23 840 247)" fill="#a8a8a8" opacity="0.7"/><rect x="849.85" y="236.6" width="4.5" height="9" rx="1.5" transform="rotate(-19 853 242)" fill="#d2d2d2" opacity="0.55"/><rect x="851.65" y="238.4" width="4.5" height="9" rx="1.5" transform="rotate(-19 853 242)" fill="#5e5e5e" opacity="0.5"/><rect x="850.75" y="237.5" width="4.5" height="9" rx="1.5" transform="rotate(-19 853 242)" fill="#a8a8a8" opacity="0.7"/><rect x="863.85" y="232.6" width="4.5" height="9" rx="1.5" transform="rotate(-15 867 238)" fill="#d2d2d2" opacity="0.55"/><rect x="865.65" y="234.4" width="4.5" height="9" rx="1.5" transform="rotate(-15 867 238)" fill="#5e5e5e" opacity="0.5"/><rect x="864.75" y="233.5" width="4.5" height="9" rx="1.5" transform="rotate(-15 867 238)" fill="#a8a8a8" opacity="0.7"/><rect x="877.85" y="229.6" width="4.5" height="9" rx="1.5" transform="rotate(-11 881 235)" fill="#d2d2d2" opacity="0.55"/><rect x="879.65" y="231.4" width="4.5" height="9" rx="1.5" transform="rotate(-11 881 235)" fill="#5e5e5e" opacity="0.5"/><rect x="878.75" y="230.5" width="4.5" height="9" rx="1.5" transform="rotate(-11 881 235)" fill="#a8a8a8" opacity="0.7"/><rect x="891.85" y="227.6" width="4.5" height="9" rx="1.5" transform="rotate(-7 895 233)" fill="#d2d2d2" opacity="0.55"/><rect x="893.65" y="229.4" width="4.5" height="9" rx="1.5" transform="rotate(-7 895 233)" fill="#5e5e5e" opacity="0.5"/><rect x="892.75" y="228.5" width="4.5" height="9" rx="1.5" transform="rotate(-7 895 233)" fill="#a8a8a8" opacity="0.7"/><rect x="828.85" y="283.85" width="4.5" height="8.5" rx="1.5" transform="rotate(20 832 289)" fill="#d2d2d2" opacity="0.55"/><rect x="830.65" y="285.65" width="4.5" height="8.5" rx="1.5" transform="rotate(20 832 289)" fill="#5e5e5e" opacity="0.5"/><rect x="829.75" y="284.75" width="4.5" height="8.5" rx="1.5" transform="rotate(20 832 289)" fill="#a8a8a8" opacity="0.7"/><rect x="839.85" y="287.85" width="4.5" height="8.5" rx="1.5" transform="rotate(20 843 293)" fill="#d2d2d2" opacity="0.55"/><rect x="841.65" y="289.65" width="4.5" height="8.5" rx="1.5" transform="rotate(20 843 293)" fill="#5e5e5e" opacity="0.5"/><rect x="840.75" y="288.75" width="4.5" height="8.5" rx="1.5" transform="rotate(20 843 293)" fill="#a8a8a8" opacity="0.7"/><rect x="851.85" y="292.85" width="4.5" height="8.5" rx="1.5" transform="rotate(20 855 298)" fill="#d2d2d2" opacity="0.55"/><rect x="853.65" y="294.65" width="4.5" height="8.5" rx="1.5" transform="rotate(20 855 298)" fill="#5e5e5e" opacity="0.5"/><rect x="852.75" y="293.75" width="4.5" height="8.5" rx="1.5" transform="rotate(20 855 298)" fill="#a8a8a8" opacity="0.7"/><rect x="863.85" y="297.85" width="4.5" height="8.5" rx="1.5" transform="rotate(20 867 303)" fill="#d2d2d2" opacity="0.55"/><rect x="865.65" y="299.65" width="4.5" height="8.5" rx="1.5" transform="rotate(20 867 303)" fill="#5e5e5e" opacity="0.5"/><rect x="864.75" y="298.75" width="4.5" height="8.5" rx="1.5" transform="rotate(20 867 303)" fill="#a8a8a8" opacity="0.7"/><rect x="875.85" y="302.85" width="4.5" height="8.5" rx="1.5" transform="rotate(20 879 308)" fill="#d2d2d2" opacity="0.55"/><rect x="877.65" y="304.65" width="4.5" height="8.5" rx="1.5" transform="rotate(20 879 308)" fill="#5e5e5e" opacity="0.5"/><rect x="876.75" y="303.75" width="4.5" height="8.5" rx="1.5" transform="rotate(20 879 308)" fill="#a8a8a8" opacity="0.7"/><rect x="887.85" y="307.85" width="4.5" height="8.5" rx="1.5" transform="rotate(20 891 313)" fill="#d2d2d2" opacity="0.55"/><rect x="889.65" y="309.65" width="4.5" height="8.5" rx="1.5" transform="rotate(20 891 313)" fill="#5e5e5e" opacity="0.5"/><rect x="888.75" y="308.75" width="4.5" height="8.5" rx="1.5" transform="rotate(20 891 313)" fill="#a8a8a8" opacity="0.7"/><rect x="899.85" y="312.85" width="4.5" height="8.5" rx="1.5" transform="rotate(20 903 318)" fill="#d2d2d2" opacity="0.55"/><rect x="901.65" y="314.65" width="4.5" height="8.5" rx="1.5" transform="rotate(20 903 318)" fill="#5e5e5e" opacity="0.5"/><rect x="900.75" y="313.75" width="4.5" height="8.5" rx="1.5" transform="rotate(20 903 318)" fill="#a8a8a8" opacity="0.7"/><rect x="911.85" y="316.85" width="4.5" height="8.5" rx="1.5" transform="rotate(20 915 322)" fill="#d2d2d2" opacity="0.55"/><rect x="913.65" y="318.65" width="4.5" height="8.5" rx="1.5" transform="rotate(20 915 322)" fill="#5e5e5e" opacity="0.5"/><rect x="912.75" y="317.75" width="4.5" height="8.5" rx="1.5" transform="rotate(20 915 322)" fill="#a8a8a8" opacity="0.7"/><rect x="923.85" y="319.85" width="4.5" height="8.5" rx="1.5" transform="rotate(20 927 325)" fill="#d2d2d2" opacity="0.55"/><rect x="925.65" y="321.65" width="4.5" height="8.5" rx="1.5" transform="rotate(20 927 325)" fill="#5e5e5e" opacity="0.5"/><rect x="924.75" y="320.75" width="4.5" height="8.5" rx="1.5" transform="rotate(20 927 325)" fill="#a8a8a8" opacity="0.7"/><rect x="963.1" y="283.1" width="4" height="12" rx="1.5" transform="rotate(35 966 290)" fill="#d2d2d2" opacity="0.55"/><rect x="964.9" y="284.9" width="4" height="12" rx="1.5" transform="rotate(35 966 290)" fill="#5e5e5e" opacity="0.5"/><rect x="964.0" y="284.0" width="4" height="12" rx="1.5" transform="rotate(35 966 290)" fill="#a8a8a8" opacity="0.7"/><rect x="973.1" y="277.6" width="4" height="13" rx="1.5" transform="rotate(35 976 285)" fill="#d2d2d2" opacity="0.55"/><rect x="974.9" y="279.4" width="4" height="13" rx="1.5" transform="rotate(35 976 285)" fill="#5e5e5e" opacity="0.5"/><rect x="974.0" y="278.5" width="4" height="13" rx="1.5" transform="rotate(35 976 285)" fill="#a8a8a8" opacity="0.7"/><rect x="986.6" y="289.6" width="5" height="11" rx="1.5" transform="rotate(40 990 296)" fill="#d2d2d2" opacity="0.55"/><rect x="988.4" y="291.4" width="5" height="11" rx="1.5" transform="rotate(40 990 296)" fill="#5e5e5e" opacity="0.5"/><rect x="987.5" y="290.5" width="5" height="11" rx="1.5" transform="rotate(40 990 296)" fill="#a8a8a8" opacity="0.7"/><rect x="998.6" y="296.1" width="5" height="10" rx="1.5" transform="rotate(45 1002 302)" fill="#d2d2d2" opacity="0.55"/><rect x="1000.4" y="297.9" width="5" height="10" rx="1.5" transform="rotate(45 1002 302)" fill="#5e5e5e" opacity="0.5"/><rect x="999.5" y="297.0" width="5" height="10" rx="1.5" transform="rotate(45 1002 302)" fill="#a8a8a8" opacity="0.7"/><rect x="1010.1" y="289.6" width="4" height="13" rx="1.5" transform="rotate(20 1013 297)" fill="#d2d2d2" opacity="0.55"/><rect x="1011.9" y="291.4" width="4" height="13" rx="1.5" transform="rotate(20 1013 297)" fill="#5e5e5e" opacity="0.5"/><rect x="1011.0" y="290.5" width="4" height="13" rx="1.5" transform="rotate(20 1013 297)" fill="#a8a8a8" opacity="0.7"/><rect x="1019.1" y="281.1" width="4" height="14" rx="1.5" transform="rotate(10 1022 289)" fill="#d2d2d2" opacity="0.55"/><rect x="1020.9" y="282.9" width="4" height="14" rx="1.5" transform="rotate(10 1022 289)" fill="#5e5e5e" opacity="0.5"/><rect x="1020.0" y="282.0" width="4" height="14" rx="1.5" transform="rotate(10 1022 289)" fill="#a8a8a8" opacity="0.7"/><rect x="1028.6" y="274.1" width="3" height="12" rx="1.5" transform="rotate(5 1031 281)" fill="#d2d2d2" opacity="0.55"/><rect x="1030.4" y="275.9" width="3" height="12" rx="1.5" transform="rotate(5 1031 281)" fill="#5e5e5e" opacity="0.5"/><rect x="1029.5" y="275.0" width="3" height="12" rx="1.5" transform="rotate(5 1031 281)" fill="#a8a8a8" opacity="0.7"/><rect x="1012.1" y="311.1" width="14" height="4" rx="1.5" transform="rotate(-30 1020 314)" fill="#d2d2d2" opacity="0.55"/><rect x="1013.9" y="312.9" width="14" height="4" rx="1.5" transform="rotate(-30 1020 314)" fill="#5e5e5e" opacity="0.5"/><rect x="1013.0" y="312.0" width="14" height="4" rx="1.5" transform="rotate(-30 1020 314)" fill="#a8a8a8" opacity="0.7"/><rect x="988.1" y="315.1" width="12" height="4" rx="1.5" transform="rotate(-20 995 318)" fill="#d2d2d2" opacity="0.55"/><rect x="989.9" y="316.9" width="12" height="4" rx="1.5" transform="rotate(-20 995 318)" fill="#5e5e5e" opacity="0.5"/><rect x="989.0" y="316.0" width="12" height="4" rx="1.5" transform="rotate(-20 995 318)" fill="#a8a8a8" opacity="0.7"/></g><polyline points="787.81,251.43 826.52,226.09 873.32,213.07 918.99,211.1" fill="none" stroke="#050505" stroke-width="0.9"/><polyline points="917.0,212.37 962.74,221.52 989.48,232.08 1016.93,249.67 1049.3,268.67" fill="none" stroke="#050505" stroke-width="0.9"/><polyline points="789.22,253.54 832.85,226.09 886.34,216.95 918.99,214.83" fill="none" stroke="#050505" stroke-width="0.9"/><polyline points="917.0,214.83 940.22,219.06 966.26,224.33 989.48,233.48 1014.11,248.26 1049.3,270.08" fill="none" stroke="#050505" stroke-width="0.9"/><polyline points="923.33,219.41 964.85,237.0 988.08,239.82 1014.11,250.37 1029.6,265.85" fill="none" stroke="#050505" stroke-width="0.9"/><polyline points="792.74,268.32 844.82,234.19" fill="none" stroke="#050505" stroke-width="0.9"/><polyline points="844.82,234.19 886.34,220.11 918.99,217.3" fill="none" stroke="#050505" stroke-width="0.9"/><polyline points="917.0,217.3 940.22,220.11 964.85,232.08" fill="none" stroke="#050505" stroke-width="0.9"/><polyline points="823.0,275.0 859.6,248.26 911.67,234.89 918.99,233.48" fill="none" stroke="#050505" stroke-width="0.9"/><polyline points="917.0,231.37 938.11,230.67 966.26,231.37 988.08,231.37 1014.11,249.67" fill="none" stroke="#050505" stroke-width="0.9"/><polyline points="834.26,226.45 859.6,248.26 872.26,275.0" fill="none" stroke="#050505" stroke-width="0.9"/><polyline points="859.6,248.26 861.71,275.0" fill="none" stroke="#050505" stroke-width="0.9"/><polyline points="890.56,217.65 918.99,242.63" fill="none" stroke="#050505" stroke-width="0.9"/><polyline points="917.0,241.93 941.63,275.0" fill="none" stroke="#050505" stroke-width="0.9"/><polyline points="853.97,233.48 861.71,220.11" fill="none" stroke="#050505" stroke-width="0.9"/><polyline points="826.52,226.09 823.0,244.04" fill="none" stroke="#050505" stroke-width="0.9"/><polyline points="827.22,227.15 828.63,244.04" fill="none" stroke="#050505" stroke-width="0.9"/><polyline points="834.26,226.45 835.67,246.15" fill="none" stroke="#050505" stroke-width="0.9"/><polyline points="844.82,234.19 846.22,251.78" fill="none" stroke="#050505" stroke-width="0.9"/><polyline points="862.41,219.41 863.11,230.67" fill="none" stroke="#050505" stroke-width="0.9"/><polyline points="873.32,213.07 874.73,235.59" fill="none" stroke="#050505" stroke-width="0.9"/><polyline points="890.56,217.65 890.56,240.52" fill="none" stroke="#050505" stroke-width="0.9"/><polyline points="908.86,211.67 909.56,226.45" fill="none" stroke="#050505" stroke-width="0.9"/><polyline points="911.67,234.89 912.38,256.71" fill="none" stroke="#050505" stroke-width="0.9"/><polyline points="839.19,248.26 840.59,251.08" fill="none" stroke="#050505" stroke-width="0.9"/><polyline points="936.0,200.41 940.22,269.37" fill="none" stroke="#050505" stroke-width="0.9"/><polyline points="962.04,200.41 964.85,237.0" fill="none" stroke="#050505" stroke-width="0.9"/><polyline points="921.22,219.41 921.22,227.15" fill="none" stroke="#050505" stroke-width="0.9"/><polyline points="928.26,215.19 928.26,231.37" fill="none" stroke="#050505" stroke-width="0.9"/><polyline points="954.3,229.96 954.3,253.19" fill="none" stroke="#050505" stroke-width="0.9"/><polyline points="989.48,232.08 988.08,249.67" fill="none" stroke="#050505" stroke-width="0.9"/><polyline points="1016.93,249.67 1014.11,265.15" fill="none" stroke="#050505" stroke-width="0.9"/><polyline points="934.59,256.71 954.3,253.19 974.71,252.48" fill="none" stroke="#050505" stroke-width="0.9"/><polyline points="933.89,241.22 960.63,263.74" fill="none" stroke="#050505" stroke-width="0.9"/><polyline points="950.78,275.0 994.41,267.26 1049.3,266.56" fill="none" stroke="#050505" stroke-width="0.9"/><polyline points="785.0,307.08 824.41,274.0" fill="none" stroke="#050505" stroke-width="0.9"/><polyline points="823.0,311.3 844.82,290.89" fill="none" stroke="#050505" stroke-width="0.9"/><polyline points="800.48,348.6 884.93,300.04 918.99,288.07" fill="none" stroke="#050505" stroke-width="0.9"/><polyline points="872.26,274.0 884.93,300.04 903.93,348.6" fill="none" stroke="#050505" stroke-width="0.9"/><polyline points="884.93,300.04 887.74,334.52" fill="none" stroke="#050505" stroke-width="0.9"/><polyline points="873.67,302.15 880.0,317.63" fill="none" stroke="#050505" stroke-width="0.9"/><polyline points="939.52,274.0 975.41,348.6" fill="none" stroke="#050505" stroke-width="0.9"/><polyline points="991.6,274.0 1023.97,333.82" fill="none" stroke="#050505" stroke-width="0.9"/><polyline points="1029.6,274.0 1049.3,303.56" fill="none" stroke="#050505" stroke-width="0.9"/><polyline points="934.59,274.0 934.59,286.67" fill="none" stroke="#050505" stroke-width="0.9"/><polyline points="942.33,274.0 942.33,302.15" fill="none" stroke="#050505" stroke-width="0.9"/><polyline points="987.37,274.0 985.26,297.22" fill="none" stroke="#050505" stroke-width="0.9"/><polyline points="955.71,335.22 960.63,341.56" fill="none" stroke="#050505" stroke-width="0.9"/><polyline points="1030.3,302.15 1034.52,306.37" fill="none" stroke="#050505" stroke-width="0.9"/><polyline points="928.96,276.81 934.59,281.74" fill="none" stroke="#050505" stroke-width="0.9"/><polyline points="787.81,251.43 794.15,269.37 794.15,274.0 815.26,348.6" fill="none" stroke="#111" stroke-width="1.6"/><path d="M936.0 275.0 Q 947.26 241.22 966.26 235.59 T 1008.48 249.67" fill="none" stroke="#111" stroke-width="0.9"/><polyline points="985.97,308.48 993.0,298.63 996.52,291.59 997.58,282.44 997.23,274.0 997.23,275.0 991.6,262.34 984.56,253.89" fill="none" stroke="#111" stroke-width="0.9"/><polyline points="928.26,278.22 945.15,286.67 966.26,290.19 987.37,289.48 1001.45,285.96 1007.08,279.63 1005.67,274.0 1005.67,275.0 997.93,268.67 983.85,266.56" fill="none" stroke="#111" stroke-width="0.9"/><polyline points="931.07,348.6 973.3,335.93 1008.48,321.85 1033.12,305.67 1041.56,295.11 1036.63,284.56 1026.08,276.11" fill="none" stroke="#3a3a3a" stroke-width="0.9"/><polyline points="785.0,339.45 795.56,348.6" fill="none" stroke="#555" stroke-width="0.9"/><polyline points="786.41,269.37 795.56,268.67 806.11,256.71 814.56,249.67 824.41,244.74 834.26,239.82 845.52,234.89 855.37,234.19 869.45,230.67 883.52,227.85 891.97,226.8 918.99,227.85 917.0,227.15 938.11,230.67 956.41,235.59 966.26,239.11 980.34,244.74 990.89,251.08 1001.45,257.41 1015.52,264.45 1022.56,275.0 1022.56,274.0" fill="none" stroke="#f39a2a" stroke-width="1.5"/><polyline points="1022.56,274.0 1049.3,284.56" fill="none" stroke="#d09060" stroke-width="1.2"/><polyline points="1008.48,348.6 1049.3,331.71" fill="none" stroke="#d09060" stroke-width="1.2"/><line x1="901.12" y1="285.96" x2="901.12" y2="222.22" stroke="#4c8ff0" stroke-width="1.4"/><path d="M900.41,203.93 896.19,223.28 904.99,223.28Z" fill="#4c8ff0"/><line x1="917.3" y1="287.37" x2="956.41" y2="278.22" stroke="#ee4a5f" stroke-width="1.4"/><path d="M967.67,275.06 953.59,274.7 956.41,281.74Z" fill="#ee4a5f"/><line x1="897.6" y1="285.96" x2="878.6" y2="272.19" stroke="#7ec832" stroke-width="1.4"/><path d="M874.02,268.32 884.93,269.37 878.6,275.0Z" fill="#7ec832"/><path d="M885.99,246.15 890.56,248.26 890.91,257.41 886.34,255.3Z" fill="none" stroke="#e05060" stroke-width="0.8"/><path d="M926.15,250.37 934.95,248.96 934.95,258.82 926.5,259.52Z" fill="#7ec832" opacity="0.85"/><path d="M910.97,276.11 918.99,274.7 918.99,277.52 911.67,277.52Z" fill="#4c8ff0"/><circle cx="902.87" cy="290.89" r="13.5" fill="none" stroke="#e8e8e8" stroke-width="1.8"/><circle cx="902.52" cy="278.93" r="10.4" fill="none" stroke="#fff" stroke-width="1.5"/><circle cx="902.52" cy="278.93" r="10.4" fill="none" stroke="#e02020" stroke-width="1.5" stroke-dasharray="3.3 3.3"/><rect x="900.87" y="288.39" width="4" height="4" fill="#f0962a"/></g><rect x="785.5" y="200" width="264.5" height="149.5" fill="none" stroke="#1a1a1a" stroke-width="1"/><rect x="785.5" y="200" width="264.5" height="149.5" fill="none" stroke="#f48888" stroke-width="1" stroke-dasharray="3 3"/></svg>
<!-- sec_img -->
<div class="a" style="left:1px;top:472px;width:921px;height:547px;background:#444444;border-radius:6px 6px 6px 6px;"></div>
<div class="a" style="left:1px;top:472px;width:921px;height:25px;background:#434343;border-radius:6px 6px 0 0;"></div>
<div class="a" style="left:1px;top:497px;width:921px;height:20px;background:#3b3b3b;"></div>
<div class="a" style="left:232px;top:632px;width:480px;height:270px;background:repeating-conic-gradient(#333333 0 25%,#262626 0 50%);background-size:16px 16px;background-position:0 4px"></div>
<div class="a" style="left:9px;top:476px;width:30px;height:18px;background:#303030;border-radius:4px;"></div>
<svg style="left:13px;top:478px;" width="18" height="15" viewBox="0 0 18 15"><path d="M1.5 1.5 H12.5 V13.5 H1.5 Z" fill="none" stroke="#e0e0e0" stroke-width="1"/><path d="M4 3 H11 V5.5 H8.8 V10 H6.2 V5.5 H4 Z" fill="#e0e0e0"/></svg>
<svg style="left:30px;top:482px;" width="8" height="6" viewBox="0 0 8 6"><path d="M1 1.5 L4 4.5 L7 1.5" fill="none" stroke="#a0a0a0" stroke-width="1.4" stroke-linecap="round" stroke-linejoin="round"/></svg>
<div class="a" style="left:46px;top:476px;width:64px;height:18px;background:#303030;border-radius:4px;"></div>
<svg style="left:49px;top:477px;" width="17" height="17" viewBox="0 0 17 17"><rect x="1.5" y="1.5" width="13" height="13" fill="none" stroke="#e0e0e0" stroke-width="1"/><path d="M2.5 14 L6.5 8 L10 14 Z" fill="#e0e0e0"/><circle cx="11" cy="5" r="1.5" fill="#e0e0e0"/></svg>
<div class="t" style="left:71.25px;top:478.20px;font-size:11.5px;line-height:14px;color:#e0e0e0;">View</div>
<svg style="left:101px;top:482px;" width="8" height="6" viewBox="0 0 8 6"><path d="M1 1.5 L4 4.5 L7 1.5" fill="none" stroke="#a0a0a0" stroke-width="1.4" stroke-linecap="round" stroke-linejoin="round"/></svg>
<div class="t" style="left:123px;top:478.20px;font-size:11.5px;line-height:14px;color:#d0d0d0;">View</div>
<div class="t" style="left:163px;top:478.20px;font-size:11.5px;line-height:14px;color:#d0d0d0;">Image</div>
<div class="a" style="left:335px;top:476px;width:150.60000000000002px;height:18px;background:#282828;border-radius:4px;"></div>
<div class="a" style="left:335px;top:476px;width:30.5px;height:18px;background:#303030;border-radius:4px 0 0 4px;"></div>
<svg style="left:339px;top:477px;" width="17" height="17" viewBox="0 0 17 17"><rect x="1.5" y="1.5" width="13" height="13" fill="none" stroke="#e0e0e0" stroke-width="1"/><path d="M2.5 14 L6.5 8 L10 14 Z" fill="#e0e0e0"/><circle cx="11" cy="5" r="1.5" fill="#e0e0e0"/></svg>
<svg style="left:356px;top:482px;" width="8" height="6" viewBox="0 0 8 6"><path d="M1 1.5 L4 4.5 L7 1.5" fill="none" stroke="#a0a0a0" stroke-width="1.4" stroke-linecap="round" stroke-linejoin="round"/></svg>
<div class="a" style="left:365.5px;top:476px;width:120px;height:18px;background:#1f1f1f;"></div>
<div class="t" style="left:373px;top:478.20px;font-size:11.5px;line-height:14px;color:#e0e0e0;">Render Result</div>
<div class="a" style="left:485.6px;top:476px;width:79.39999999999998px;height:18px;background:#4e4e4e;border-radius:0 4px 4px 0;"></div>
<div class="a" style="left:505px;top:476px;width:1px;height:18px;background:#3e3e3e;"></div>
<div class="a" style="left:525.5px;top:476px;width:1px;height:18px;background:#3e3e3e;"></div>
<div class="a" style="left:545.5px;top:476px;width:1px;height:18px;background:#3e3e3e;"></div>
<svg style="left:487px;top:477px;" width="17" height="17" viewBox="0 0 17 17"><path d="M8.5 2 L14 4 V8.5 C14 12 11.5 14 8.5 15.5 C5.5 14 3 12 3 8.5 V4 Z" fill="none" stroke="#aaa" stroke-width="1"/></svg>
<svg style="left:507px;top:477px;" width="17" height="17" viewBox="0 0 17 17"><path d="M5.5 4.5 V2 H11.5 L14 4.5 V12 H11.5" fill="none" stroke="#e0e0e0" stroke-width="1"/><path d="M2.5 5 H9 L11.5 7.5 V15 H2.5 Z" fill="none" stroke="#e0e0e0" stroke-width="1"/></svg>
<svg style="left:527px;top:477px;" width="17" height="17" viewBox="0 0 17 17"><path d="M1.5 3 H7 L8.5 5 H15.5 V14.5 H1.5 Z" fill="#e0e0e0"/><path d="M1.5 7 H15.5" stroke="#4e4e4e" stroke-width="1"/></svg>
<svg style="left:547px;top:477px;" width="17" height="17" viewBox="0 0 17 17"><path d="M4 4.5 L13 13.5 M13 4.5 L4 13.5" stroke="#e0e0e0" stroke-width="1.2"/></svg>
<div class="a" style="left:639px;top:476px;width:238px;height:18px;background:#2f2f2f;border-radius:4px;"></div>
<div class="a" style="left:701px;top:476px;width:1px;height:18px;background:#444;"></div>
<div class="a" style="left:796.8px;top:476px;width:1px;height:18px;background:#444;"></div>
<div class="t" style="left:646px;top:478.20px;font-size:11.5px;line-height:14px;color:#e0e0e0;">Slot 2</div>
<svg style="left:690px;top:482px;" width="8" height="6" viewBox="0 0 8 6"><path d="M1 1.5 L4 4.5 L7 1.5" fill="none" stroke="#a0a0a0" stroke-width="1.4" stroke-linecap="round" stroke-linejoin="round"/></svg>
<div class="t" style="left:708.75px;top:478.20px;font-size:11.5px;line-height:14px;color:#e0e0e0;">View Layer</div>
<svg style="left:786px;top:482px;" width="8" height="6" viewBox="0 0 8 6"><path d="M1 1.5 L4 4.5 L7 1.5" fill="none" stroke="#a0a0a0" stroke-width="1.4" stroke-linecap="round" stroke-linejoin="round"/></svg>
<div class="t" style="left:805px;top:478.20px;font-size:11.5px;line-height:14px;color:#e0e0e0;">Combined</div>
<svg style="left:866px;top:482px;" width="8" height="6" viewBox="0 0 8 6"><path d="M1 1.5 L4 4.5 L7 1.5" fill="none" stroke="#a0a0a0" stroke-width="1.4" stroke-linecap="round" stroke-linejoin="round"/></svg>
<div class="a" style="left:884px;top:476px;width:30px;height:18px;background:#2f2f2f;border-radius:4px;"></div>
<svg style="left:886px;top:477px;" width="17" height="17" viewBox="0 0 17 17"><rect x="1.5" y="1.5" width="13" height="13" fill="none" stroke="#e0e0e0" stroke-width="1"/><path d="M1.5 1.5 L14.5 14.5 L14.5 1.5 Z" fill="#e0e0e0" opacity="0"/><path d="M2 2 L14 14 H2 Z" fill="#666"/><path d="M2 2 L14 14" stroke="#e0e0e0" stroke-width="1.2"/><path d="M3 14 L7 9 L10 14Z" fill="#888"/><circle cx="11" cy="5" r="1.6" fill="#e0e0e0"/></svg>
<svg style="left:903px;top:482px;" width="8" height="6" viewBox="0 0 8 6"><path d="M1 1.5 L4 4.5 L7 1.5" fill="none" stroke="#a0a0a0" stroke-width="1.4" stroke-linecap="round" stroke-linejoin="round"/></svg>
<div class="t" style="left:12.5px;top:499.70px;font-size:11.5px;line-height:14px;color:#ececec;">Frame:96 | Time:00:13.45 | Mem:116.57M (0.00M, Peak 279.53M) | clEnqueueWriteBuffer</div>
<svg style="left:2px;top:514px;" width="6" height="9" viewBox="0 0 6 9"><path d="M1 1 L4.5 4.5 L1 8" fill="none" stroke="#888" stroke-width="1"/></svg>
<div class="a" style="left:885.3px;top:505.9px;width:27px;height:27px;background:#383838;border-radius:13.5px;"></div>
<div class="a" style="left:885.3px;top:536.3px;width:27px;height:27px;background:#383838;border-radius:13.5px;"></div>
<svg style="left:889px;top:510px;" width="20" height="20" viewBox="0 0 20 20"><circle cx="11.5" cy="8" r="5.5" fill="#e0e0e0"/><path d="M11.5 5 V11 M8.5 8 H14.5" stroke="#383838" stroke-width="1.3"/><path d="M7.5 12 L3 16.5" stroke="#e0e0e0" stroke-width="2.2" stroke-linecap="round"/></svg>
<svg style="left:889px;top:540px;" width="20" height="20" viewBox="0 0 20 20"><path d="M5.2 10.5 V5.5 M8 10 V3.5 M10.8 10 V3.2 M13.5 10.5 V4.8" stroke="#e0e0e0" stroke-width="2.1" stroke-linecap="round"/><path d="M4.2 10 C4 13 4.5 16.5 8.5 17.5 C12 18.2 14 16.5 15 14.5 L17.6 10 C18 9.2 17 8.4 16.2 9 L14.5 10.8 V9.5 H4.2 Z" fill="#e0e0e0"/></svg>
<svg style="left:915px;top:515px;" width="6" height="9" viewBox="0 0 6 9"><path d="M4.5 1 L1.5 4.5 L4.5 8" fill="none" stroke="#888" stroke-width="1"/></svg>
<!-- sec_tl -->
<div class="a" style="left:925px;top:472px;width:660px;height:174px;border-radius:6px;overflow:hidden;background:#2e2e2e">
<div class="a" style="left:0px;top:0px;width:660px;height:25px;background:#303030;"></div>
<div class="a" style="left:0px;top:25px;width:660px;height:22.5px;background:#282828;"></div>
<div class="a" style="left:0px;top:47.5px;width:660px;height:126.5px;background:#303030;"></div>
<div class="a" style="left:198.79999999999995px;top:47.5px;width:319.4375px;height:126.5px;background:#3a3a3a;"></div>
<div class="a" style="left:36.89999999999998px;top:25px;width:1px;height:149px;background:#242424;"></div>
<div class="a" style="left:70.52499999999998px;top:47.5px;width:1px;height:126.5px;background:#272727;"></div>
<div class="a" style="left:104.15000000000009px;top:25px;width:1px;height:149px;background:#242424;"></div>
<div class="a" style="left:137.7750000000001px;top:47.5px;width:1px;height:126.5px;background:#272727;"></div>
<div class="a" style="left:171.4000000000001px;top:25px;width:1px;height:149px;background:#242424;"></div>
<div class="a" style="left:205.0250000000001px;top:47.5px;width:1px;height:126.5px;background:#272727;"></div>
<div class="a" style="left:238.6500000000001px;top:25px;width:1px;height:149px;background:#242424;"></div>
<div class="a" style="left:272.2750000000001px;top:47.5px;width:1px;height:126.5px;background:#272727;"></div>
<div class="a" style="left:305.9000000000001px;top:25px;width:1px;height:149px;background:#242424;"></div>
<div class="a" style="left:339.5250000000001px;top:47.5px;width:1px;height:126.5px;background:#272727;"></div>
<div class="a" style="left:373.1500000000001px;top:25px;width:1px;height:149px;background:#242424;"></div>
<div class="a" style="left:406.7750000000001px;top:47.5px;width:1px;height:126.5px;background:#272727;"></div>
<div class="a" style="left:440.4000000000001px;top:25px;width:1px;height:149px;background:#242424;"></div>
<div class="a" style="left:474.0250000000001px;top:47.5px;width:1px;height:126.5px;background:#272727;"></div>
<div class="a" style="left:507.6500000000001px;top:25px;width:1px;height:149px;background:#242424;"></div>
<div class="a" style="left:541.2750000000001px;top:47.5px;width:1px;height:126.5px;background:#272727;"></div>
<div class="a" style="left:574.9000000000001px;top:25px;width:1px;height:149px;background:#242424;"></div>
<div class="a" style="left:608.5250000000001px;top:47.5px;width:1px;height:126.5px;background:#272727;"></div>
<div class="a" style="left:642.1500000000001px;top:25px;width:1px;height:149px;background:#242424;"></div>
<div class="a" style="left:40.39999999999998px;top:53px;width:477.80000000000007px;height:10px;background:#262424;"></div>
<div class="a" style="left:518.8374999999999px;top:47.5px;width:1.2px;height:126px;background:#0e0e0e;"></div>
<div class="a" style="left:10px;top:164px;width:640px;height:8.5px;background:#636363;border-radius:4.25px;"></div>
<div class="a" style="left:11px;top:165px;width:7px;height:6.5px;background:#4c4c4c;border-radius:3.25px;"></div>
<div class="a" style="left:641px;top:165px;width:7px;height:6.5px;background:#4c4c4c;border-radius:3.25px;"></div>
</div>
<div class="a" style="left:1389px;top:525px;width:54px;height:10px;background:#d47a10;"></div>
<div class="a" style="left:925px;top:476px;width:96.29999999999995px;height:18px;background:#2b2b2b;border-radius:0 4px 4px 0;"></div>
<div class="a" style="left:961.6px;top:476px;width:1px;height:18px;background:#444;"></div>
<div class="a" style="left:925px;top:472px;width:36px;height:25px;overflow:hidden"><div class="t" style="left:-27.16999999999996px;top:6.20px;font-size:11.5px;line-height:14px;color:#e0e0e0;">Playback</div>
</div><svg style="left:952px;top:482px;" width="8" height="6" viewBox="0 0 8 6"><path d="M1 1.5 L4 4.5 L7 1.5" fill="none" stroke="#a0a0a0" stroke-width="1.4" stroke-linecap="round" stroke-linejoin="round"/></svg>
<div class="t" style="left:970px;top:478.20px;font-size:11.5px;line-height:14px;color:#e0e0e0;">Keying</div>
<svg style="left:1012px;top:482px;" width="8" height="6" viewBox="0 0 8 6"><path d="M1 1.5 L4 4.5 L7 1.5" fill="none" stroke="#a0a0a0" stroke-width="1.4" stroke-linecap="round" stroke-linejoin="round"/></svg>
<div class="t" style="left:1029px;top:478.20px;font-size:11.5px;line-height:14px;color:#d0d0d0;">View</div>
<div class="t" style="left:1069px;top:478.20px;font-size:11.5px;line-height:14px;color:#d0d0d0;">Marker</div>
<div class="a" style="left:1135px;top:476px;width:18px;height:18px;background:#505050;border-radius:4px;"></div>
<div class="a" style="left:1140px;top:481px;width:8px;height:8px;background:#ddd;border-radius:4px;"></div>
<div class="a" style="left:1160px;top:476px;width:118px;height:18px;background:#505050;border-radius:4px;"></div>
<div class="a" style="left:1179.17px;top:476px;width:1px;height:18px;background:#404040;"></div>
<div class="a" style="left:1198.84px;top:476px;width:1px;height:18px;background:#404040;"></div>
<div class="a" style="left:1218.51px;top:476px;width:1px;height:18px;background:#404040;"></div>
<div class="a" style="left:1238.18px;top:476px;width:1px;height:18px;background:#404040;"></div>
<div class="a" style="left:1257.85px;top:476px;width:1px;height:18px;background:#404040;"></div>
<svg style="left:1161.0px;top:476px;" width="18" height="18" viewBox="0 0 18 18"><path d="M4.5 4 V14 M14 4 L7 9 L14 14 Z" stroke="#ddd" stroke-width="1.6" fill="#ddd"/></svg>
<svg style="left:1180.67px;top:476px;" width="18" height="18" viewBox="0 0 18 18"><path d="M4 9 L7.5 5.5 L11 9 L7.5 12.5 Z M16 5 L11.5 9 L16 13 Z" fill="#ddd"/></svg>
<svg style="left:1200.34px;top:476px;" width="18" height="18" viewBox="0 0 18 18"><path d="M14 4 L5 9 L14 14 Z" fill="#ddd"/></svg>
<svg style="left:1220.01px;top:476px;" width="18" height="18" viewBox="0 0 18 18"><path d="M5 4 L14 9 L5 14 Z" fill="#ddd"/></svg>
<svg style="left:1239.68px;top:476px;" width="18" height="18" viewBox="0 0 18 18"><path d="M3 5 L7.5 9 L3 13 Z M8 9 L11.5 5.5 L15 9 L11.5 12.5 Z" fill="#ddd"/></svg>
<svg style="left:1259.35px;top:476px;" width="18" height="18" viewBox="0 0 18 18"><path d="M14 4 V14 M4 4 L11 9 L4 14 Z" stroke="#ddd" stroke-width="1.6" fill="#ddd"/></svg>
<div class="a" style="left:1296px;top:476px;width:73px;height:18px;background:#545454;border-radius:4px;"></div>
<div class="t" style="left:1312.0px;width:40px;text-align:center;top:478.20px;font-size:11.5px;line-height:14px;color:#e0e0e0;">48</div>
<div class="a" style="left:1376px;top:476px;width:190.5px;height:18px;background:#545454;border-radius:4px;"></div>
<div class="a" style="left:1376px;top:476px;width:18px;height:18px;background:#4a4a4a;border-radius:4px 0 0 4px;"></div>
<div class="a" style="left:1482px;top:476px;width:1px;height:18px;background:#464646;"></div>
<svg style="left:1377px;top:476px;" width="17" height="18" viewBox="0 0 17 18"><circle cx="8.5" cy="10" r="5.5" fill="none" stroke="#ccc" stroke-width="1.1"/><path d="M8.5 10 V6.5 M8.5 10 H11 M6.5 2.5 H10.5 M13 4.5 L14.5 3" stroke="#ccc" stroke-width="1.1"/></svg>
<div class="t" style="left:1410px;top:478.20px;font-size:11.5px;line-height:14px;color:#e0e0e0;">Start</div>
<div class="t" style="left:1455.4px;top:478.20px;font-size:11.5px;line-height:14px;color:#e0e0e0;">48</div>
<div class="t" style="left:1498.5px;top:478.20px;font-size:11.5px;line-height:14px;color:#e0e0e0;">End</div>
<div class="t" style="left:1532.3px;top:478.20px;font-size:11.5px;line-height:14px;color:#e0e0e0;">143</div>
<div class="t" style="left:942.4px;width:40px;text-align:center;top:501.20px;font-size:11.5px;line-height:14px;color:#c8c8c8;">0</div>
<div class="t" style="left:1009.6500000000001px;width:40px;text-align:center;top:501.20px;font-size:11.5px;line-height:14px;color:#c8c8c8;">20</div>
<div class="t" style="left:1076.9px;width:40px;text-align:center;top:501.20px;font-size:11.5px;line-height:14px;color:#c8c8c8;">40</div>
<div class="t" style="left:1144.15px;width:40px;text-align:center;top:501.20px;font-size:11.5px;line-height:14px;color:#c8c8c8;">60</div>
<div class="t" style="left:1211.4px;width:40px;text-align:center;top:501.20px;font-size:11.5px;line-height:14px;color:#c8c8c8;">80</div>
<div class="t" style="left:1278.65px;width:40px;text-align:center;top:501.20px;font-size:11.5px;line-height:14px;color:#c8c8c8;">100</div>
<div class="t" style="left:1345.9px;width:40px;text-align:center;top:501.20px;font-size:11.5px;line-height:14px;color:#c8c8c8;">120</div>
<div class="t" style="left:1413.15px;width:40px;text-align:center;top:501.20px;font-size:11.5px;line-height:14px;color:#c8c8c8;">140</div>
<div class="t" style="left:1480.4px;width:40px;text-align:center;top:501.20px;font-size:11.5px;line-height:14px;color:#c8c8c8;">160</div>
<div class="t" style="left:1547.65px;width:40px;text-align:center;top:501.20px;font-size:11.5px;line-height:14px;color:#c8c8c8;">180</div>
<div class="a" style="left:1111px;top:499.6px;width:25px;height:17.7px;background:#5680c2;border-radius:5px;"></div>
<div class="t" style="left:1108.5px;width:30px;text-align:center;top:501.20px;font-size:11.5px;line-height:14px;color:#fff;">48</div>
<div class="a" style="left:1122.5px;top:517px;width:2px;height:119px;background:#5680c2;"></div>
<div class="a" style="left:1122.5px;top:644.5px;width:2px;height:1.5px;background:#5680c2;"></div>
<svg style="left:955.9px;top:524px;" width="16" height="11" viewBox="0 0 16 11"><path d="M9.5 0.3 L14.7 5.5 L9.5 10.7 L4.3 5.5 Z" fill="#e8e8e8" stroke="#000" stroke-width="1.3"/></svg>
<svg style="left:1013.5px;top:524px;" width="16" height="11" viewBox="0 0 16 11"><path d="M6 0.3 L11.2 5.5 L6 10.7 L0.8 5.5 Z" fill="#e8e8e8" stroke="#000" stroke-width="1.3"/><path d="M9.5 0.3 L14.7 5.5 L9.5 10.7 L4.3 5.5 Z" fill="#e8e8e8" stroke="#000" stroke-width="1.3"/></svg>
<svg style="left:1044.5px;top:524px;" width="16" height="11" viewBox="0 0 16 11"><path d="M6 0.3 L11.2 5.5 L6 10.7 L0.8 5.5 Z" fill="#e8e8e8" stroke="#000" stroke-width="1.3"/><path d="M9.5 0.3 L14.7 5.5 L9.5 10.7 L4.3 5.5 Z" fill="#e8e8e8" stroke="#000" stroke-width="1.3"/></svg>
<svg style="left:1071.0px;top:524px;" width="16" height="11" viewBox="0 0 16 11"><path d="M6 0.3 L11.2 5.5 L6 10.7 L0.8 5.5 Z" fill="#e8e8e8" stroke="#000" stroke-width="1.3"/><path d="M9.5 0.3 L14.7 5.5 L9.5 10.7 L4.3 5.5 Z" fill="#e8e8e8" stroke="#000" stroke-width="1.3"/></svg>
<svg style="left:1111.3px;top:524px;" width="16" height="11" viewBox="0 0 16 11"><path d="M6 0.3 L11.2 5.5 L6 10.7 L0.8 5.5 Z" fill="#e8e8e8" stroke="#000" stroke-width="1.3"/><path d="M9.5 0.3 L14.7 5.5 L9.5 10.7 L4.3 5.5 Z" fill="#e8e8e8" stroke="#000" stroke-width="1.3"/></svg>
<svg style="left:1141.3px;top:524px;" width="16" height="11" viewBox="0 0 16 11"><path d="M6 0.3 L11.2 5.5 L6 10.7 L0.8 5.5 Z" fill="#e8e8e8" stroke="#000" stroke-width="1.3"/><path d="M9.5 0.3 L14.7 5.5 L9.5 10.7 L4.3 5.5 Z" fill="#e8e8e8" stroke="#000" stroke-width="1.3"/></svg>
<svg style="left:1168.5px;top:524px;" width="16" height="11" viewBox="0 0 16 11"><path d="M6 0.3 L11.2 5.5 L6 10.7 L0.8 5.5 Z" fill="#e8e8e8" stroke="#000" stroke-width="1.3"/><path d="M9.5 0.3 L14.7 5.5 L9.5 10.7 L4.3 5.5 Z" fill="#e8e8e8" stroke="#000" stroke-width="1.3"/></svg>
<svg style="left:1225.3px;top:524px;" width="16" height="11" viewBox="0 0 16 11"><path d="M6 0.3 L11.2 5.5 L6 10.7 L0.8 5.5 Z" fill="#e8e8e8" stroke="#000" stroke-width="1.3"/><path d="M9.5 0.3 L14.7 5.5 L9.5 10.7 L4.3 5.5 Z" fill="#e8e8e8" stroke="#000" stroke-width="1.3"/></svg>
<svg style="left:1255.8px;top:524px;" width="16" height="11" viewBox="0 0 16 11"><path d="M6 0.3 L11.2 5.5 L6 10.7 L0.8 5.5 Z" fill="#e8e8e8" stroke="#000" stroke-width="1.3"/><path d="M9.5 0.3 L14.7 5.5 L9.5 10.7 L4.3 5.5 Z" fill="#e8e8e8" stroke="#000" stroke-width="1.3"/></svg>
<svg style="left:1283.1px;top:524px;" width="16" height="11" viewBox="0 0 16 11"><path d="M6 0.3 L11.2 5.5 L6 10.7 L0.8 5.5 Z" fill="#e8e8e8" stroke="#000" stroke-width="1.3"/><path d="M9.5 0.3 L14.7 5.5 L9.5 10.7 L4.3 5.5 Z" fill="#e8e8e8" stroke="#000" stroke-width="1.3"/></svg>
<svg style="left:1323.5px;top:524px;" width="16" height="11" viewBox="0 0 16 11"><path d="M6 0.3 L11.2 5.5 L6 10.7 L0.8 5.5 Z" fill="#e8e8e8" stroke="#000" stroke-width="1.3"/><path d="M9.5 0.3 L14.7 5.5 L9.5 10.7 L4.3 5.5 Z" fill="#e8e8e8" stroke="#000" stroke-width="1.3"/></svg>
<svg style="left:1353.5px;top:524px;" width="16" height="11" viewBox="0 0 16 11"><path d="M6 0.3 L11.2 5.5 L6 10.7 L0.8 5.5 Z" fill="#e8e8e8" stroke="#000" stroke-width="1.3"/><path d="M9.5 0.3 L14.7 5.5 L9.5 10.7 L4.3 5.5 Z" fill="#e8e8e8" stroke="#000" stroke-width="1.3"/></svg>
<svg style="left:1381.5px;top:524px;" width="16" height="11" viewBox="0 0 16 11"><path d="M6 0.3 L11.2 5.5 L6 10.7 L0.8 5.5 Z" fill="#e8e8e8" stroke="#000" stroke-width="1.3"/><path d="M9.5 0.3 L14.7 5.5 L9.5 10.7 L4.3 5.5 Z" fill="#f5b530" stroke="#000" stroke-width="1.3"/></svg>
<svg style="left:1433.7px;top:524px;" width="16" height="11" viewBox="0 0 16 11"><path d="M9.5 0.3 L14.7 5.5 L9.5 10.7 L4.3 5.5 Z" fill="#f5b530" stroke="#000" stroke-width="1.3"/></svg>
<svg style="left:1579px;top:514px;" width="6" height="9" viewBox="0 0 6 9"><path d="M4.5 1 L1.5 4.5 L4.5 8" fill="none" stroke="#888" stroke-width="1"/></svg>
<svg style="left:927px;top:514px;" width="6" height="9" viewBox="0 0 6 9"><path d="M1 1 L4.5 4.5 L1 8" fill="none" stroke="#888" stroke-width="1"/></svg>
<!-- sec_node -->
<div class="a" style="left:925px;top:649px;width:660px;height:370px;border-radius:6px;overflow:hidden;background:#232323">
<svg style="left:0;top:0" width="660" height="370"><rect x="9.100000000000023" y="0" width="1" height="370" fill="#161616"/><rect x="41.60000000000002" y="0" width="1" height="370" fill="#161616"/><rect x="74.10000000000002" y="0" width="1" height="370" fill="#161616"/><rect x="106.59999999999991" y="0" width="1" height="370" fill="#161616"/><rect x="139.0999999999999" y="0" width="1" height="370" fill="#161616"/><rect x="171.5999999999999" y="0" width="1" height="370" fill="#161616"/><rect x="204.0999999999999" y="0" width="1" height="370" fill="#161616"/><rect x="236.5999999999999" y="0" width="1" height="370" fill="#161616"/><rect x="269.0999999999999" y="0" width="1" height="370" fill="#161616"/><rect x="301.5999999999999" y="0" width="1" height="370" fill="#161616"/><rect x="334.0999999999999" y="0" width="1" height="370" fill="#161616"/><rect x="366.5999999999999" y="0" width="1" height="370" fill="#161616"/><rect x="399.0999999999999" y="0" width="1" height="370" fill="#161616"/><rect x="431.5999999999999" y="0" width="1" height="370" fill="#161616"/><rect x="464.0999999999999" y="0" width="1" height="370" fill="#161616"/><rect x="496.5999999999999" y="0" width="1" height="370" fill="#161616"/><rect x="529.0999999999999" y="0" width="1" height="370" fill="#161616"/><rect x="561.5999999999999" y="0" width="1" height="370" fill="#161616"/><rect x="594.0999999999999" y="0" width="1" height="370" fill="#161616"/><rect x="626.5999999999999" y="0" width="1" height="370" fill="#161616"/><rect x="659.0999999999999" y="0" width="1" height="370" fill="#161616"/><rect x="0" y="-27.0" width="660" height="1" fill="#161616"/><rect x="0" y="5.2999999999999545" width="660" height="1" fill="#161616"/><rect x="0" y="37.59999999999991" width="660" height="1" fill="#161616"/><rect x="0" y="69.89999999999986" width="660" height="1" fill="#161616"/><rect x="0" y="102.19999999999982" width="660" height="1" fill="#161616"/><rect x="0" y="134.49999999999977" width="660" height="1" fill="#161616"/><rect x="0" y="166.79999999999973" width="660" height="1" fill="#161616"/><rect x="0" y="199.09999999999968" width="660" height="1" fill="#161616"/><rect x="0" y="231.39999999999964" width="660" height="1" fill="#161616"/><rect x="0" y="263.6999999999996" width="660" height="1" fill="#161616"/><rect x="0" y="295.99999999999955" width="660" height="1" fill="#161616"/><rect x="0" y="328.2999999999995" width="660" height="1" fill="#161616"/><rect x="0" y="360.59999999999945" width="660" height="1" fill="#161616"/></svg>
<div class="a" style="left:58.799999999999976px;top:75.39999999999998px;width:700px;height:400px;background:#d8661c;border-radius:8px 0 0 0;"></div>
<div class="a" style="left:60.199999999999974px;top:76.59999999999998px;width:700px;height:400px;background:#414141;border-radius:7px 0 0 0;"></div>
<div class="a" style="left:60.199999999999974px;top:76.59999999999998px;width:700px;height:31.5px;background:linear-gradient(#a93b48,#9e323d);border-radius:7px 0 0 0;"></div>
<svg style="left:0;top:0;opacity:0.13" width="660" height="370"><rect x="9.100000000000023" y="0" width="1" height="370" fill="#161616"/><rect x="41.60000000000002" y="0" width="1" height="370" fill="#161616"/><rect x="74.10000000000002" y="0" width="1" height="370" fill="#161616"/><rect x="106.59999999999991" y="0" width="1" height="370" fill="#161616"/><rect x="139.0999999999999" y="0" width="1" height="370" fill="#161616"/><rect x="171.5999999999999" y="0" width="1" height="370" fill="#161616"/><rect x="204.0999999999999" y="0" width="1" height="370" fill="#161616"/><rect x="236.5999999999999" y="0" width="1" height="370" fill="#161616"/><rect x="269.0999999999999" y="0" width="1" height="370" fill="#161616"/><rect x="301.5999999999999" y="0" width="1" height="370" fill="#161616"/><rect x="334.0999999999999" y="0" width="1" height="370" fill="#161616"/><rect x="366.5999999999999" y="0" width="1" height="370" fill="#161616"/><rect x="399.0999999999999" y="0" width="1" height="370" fill="#161616"/><rect x="431.5999999999999" y="0" width="1" height="370" fill="#161616"/><rect x="464.0999999999999" y="0" width="1" height="370" fill="#161616"/><rect x="496.5999999999999" y="0" width="1" height="370" fill="#161616"/><rect x="529.0999999999999" y="0" width="1" height="370" fill="#161616"/><rect x="561.5999999999999" y="0" width="1" height="370" fill="#161616"/><rect x="594.0999999999999" y="0" width="1" height="370" fill="#161616"/><rect x="626.5999999999999" y="0" width="1" height="370" fill="#161616"/><rect x="659.0999999999999" y="0" width="1" height="370" fill="#161616"/><rect x="0" y="-27.0" width="660" height="1" fill="#161616"/><rect x="0" y="5.2999999999999545" width="660" height="1" fill="#161616"/><rect x="0" y="37.59999999999991" width="660" height="1" fill="#161616"/><rect x="0" y="69.89999999999986" width="660" height="1" fill="#161616"/><rect x="0" y="102.19999999999982" width="660" height="1" fill="#161616"/><rect x="0" y="134.49999999999977" width="660" height="1" fill="#161616"/><rect x="0" y="166.79999999999973" width="660" height="1" fill="#161616"/><rect x="0" y="199.09999999999968" width="660" height="1" fill="#161616"/><rect x="0" y="231.39999999999964" width="660" height="1" fill="#161616"/><rect x="0" y="263.6999999999996" width="660" height="1" fill="#161616"/><rect x="0" y="295.99999999999955" width="660" height="1" fill="#161616"/><rect x="0" y="328.2999999999995" width="660" height="1" fill="#161616"/><rect x="0" y="360.59999999999945" width="660" height="1" fill="#161616"/></svg>
</div>
<div class="a" style="left:925px;top:649px;width:660px;height:25px;background:#303030;border-radius:6px 6px 0 0;"></div>
<div class="a" style="left:932.75px;top:653px;width:30.75px;height:18px;background:#282828;border-radius:4px;"></div>
<svg style="left:936px;top:654px;" width="17" height="17" viewBox="0 0 17 17"><circle cx="8.5" cy="8.5" r="6.5" fill="#e0e0e0"/><path d="M8.5 2 V8.5 H15 A6.5 6.5 0 0 1 8.5 15 Z" fill="#282828" opacity="0"/><path d="M8.5 8.5 H2 A6.5 6.5 0 0 0 8.5 15 Z" fill="#555"/><path d="M8.5 2 A6.5 6.5 0 0 1 15 8.5 H8.5 Z" fill="#555"/><circle cx="8.5" cy="8.5" r="6.5" fill="none" stroke="#e0e0e0" stroke-width="1"/></svg>
<svg style="left:954px;top:659px;" width="8" height="6" viewBox="0 0 8 6"><path d="M1 1.5 L4 4.5 L7 1.5" fill="none" stroke="#a0a0a0" stroke-width="1.4" stroke-linecap="round" stroke-linejoin="round"/></svg>
<div class="t" style="left:976px;top:655.20px;font-size:11.5px;line-height:14px;color:#d0d0d0;">View</div>
<div class="t" style="left:1016px;top:655.20px;font-size:11.5px;line-height:14px;color:#d0d0d0;">Select</div>
<div class="t" style="left:1062px;top:655.20px;font-size:11.5px;line-height:14px;color:#d0d0d0;">Add</div>
<div class="t" style="left:1096px;top:655.20px;font-size:11.5px;line-height:14px;color:#d0d0d0;">Node</div>
<div class="a" style="left:1147px;top:653px;width:77.79999999999995px;height:18px;background:#282828;border-radius:4px;"></div>
<div class="t" style="left:1154.5px;top:655.20px;font-size:11.5px;line-height:14px;color:#e0e0e0;">Slot 1</div>
<svg style="left:1214px;top:659px;" width="8" height="6" viewBox="0 0 8 6"><path d="M1 1.5 L4 4.5 L7 1.5" fill="none" stroke="#a0a0a0" stroke-width="1.4" stroke-linecap="round" stroke-linejoin="round"/></svg>
<div class="a" style="left:1232px;top:653px;width:20px;height:18px;background:#595959;border-radius:4px 0 0 4px;"></div>
<svg style="left:1234px;top:654px;" width="17" height="17" viewBox="0 0 17 17"><circle cx="8.5" cy="8.5" r="6.5" fill="#e0e0e0"/><path d="M8.5 8.5 H2 A6.5 6.5 0 0 0 8.5 15 Z" fill="#444"/><path d="M8.5 2 A6.5 6.5 0 0 1 15 8.5 H8.5 Z" fill="#444"/></svg>
<div class="a" style="left:1252px;top:653px;width:104.3px;height:18px;background:#1d1d1d;"></div>
<div class="t" style="left:1258px;top:655.20px;font-size:11.5px;line-height:14px;color:#e0e0e0;">MetaliC_Volcan</div>
<div class="a" style="left:1356.3px;top:653px;width:96.70000000000005px;height:18px;background:#4e4e4e;border-radius:0 4px 4px 0;"></div>
<div class="a" style="left:1393px;top:653px;width:1px;height:18px;background:#3e3e3e;"></div>
<div class="a" style="left:1413px;top:653px;width:1px;height:18px;background:#3e3e3e;"></div>
<div class="a" style="left:1433px;top:653px;width:1px;height:18px;background:#3e3e3e;"></div>
<div class="t" style="left:1364.5px;width:20px;text-align:center;top:655.20px;font-size:11.5px;line-height:14px;color:#e0e0e0;">2</div>
<svg style="left:1394px;top:654px;" width="17" height="17" viewBox="0 0 17 17"><path d="M8.5 2 L14 4 V8.5 C14 12 11.5 14 8.5 15.5 C5.5 14 3 12 3 8.5 V4 Z" fill="none" stroke="#aaa" stroke-width="1"/></svg>
<svg style="left:1414px;top:654px;" width="17" height="17" viewBox="0 0 17 17"><path d="M5.5 4.5 V2 H11.5 L14 4.5 V12 H11.5" fill="none" stroke="#e0e0e0" stroke-width="1"/><path d="M2.5 5 H9 L11.5 7.5 V15 H2.5 Z" fill="none" stroke="#e0e0e0" stroke-width="1"/></svg>
<svg style="left:1434px;top:654px;" width="17" height="17" viewBox="0 0 17 17"><path d="M4 4.5 L13 13.5 M13 4.5 L4 13.5" stroke="#e0e0e0" stroke-width="1.2"/></svg>
<svg style="left:1460px;top:654px;" width="17" height="17" viewBox="0 0 17 17"><path d="M10 2 L15 7 L13 8 L10.5 11 L11 13.5 L3.5 6 L6 6.5 L9 4 Z M6.5 10.5 L2 15" fill="none" stroke="#bbb" stroke-width="1"/></svg>
<div class="a" style="left:1502px;top:653px;width:18px;height:18px;background:#363636;border-radius:4px;"></div>
<svg style="left:1503px;top:654px;" width="17" height="17" viewBox="0 0 17 17"><path d="M8.5 15 V3 M4.5 7 L8.5 3 L12.5 7" fill="none" stroke="#777" stroke-width="1"/></svg>
<div class="a" style="left:1527px;top:653px;width:50.700000000000045px;height:18px;background:#282828;border-radius:4px;"></div>
<div class="a" style="left:1527px;top:653px;width:19px;height:18px;background:#595959;border-radius:4px 0 0 4px;"></div>
<svg style="left:1529px;top:655px;" width="15" height="15" viewBox="0 0 15 15"><path d="M3 9 C1 5 4 1.5 8 2 C12 2.5 13.5 7 11 10 L7.5 13.5 L5.5 11.5 L9 8 C10 6.5 9 4.5 7.5 4.5 C5.5 4.5 5 6.5 5.8 7.8 Z" fill="none" stroke="#b8b8b8" stroke-width="1"/></svg>
<svg style="left:1547px;top:654px;" width="17" height="17" viewBox="0 0 17 17"><rect x="2" y="2" width="4" height="4" fill="#e0e0e0"/><path d="M8 1 V16 M1 10 H16 M12 5 V16 M5 14 H16" stroke="#e0e0e0" stroke-width="1" fill="none"/></svg>
<svg style="left:1566px;top:659px;" width="8" height="6" viewBox="0 0 8 6"><path d="M1 1.5 L4 4.5 L7 1.5" fill="none" stroke="#a0a0a0" stroke-width="1.4" stroke-linecap="round" stroke-linejoin="round"/></svg>
<div class="a" style="left:925px;top:688.5px;width:6.5px;height:13.5px;background:#1b1b1b;border-radius:0 4px 4px 0;"></div>
<svg style="left:924.5px;top:691px;" width="6" height="9" viewBox="0 0 6 9"><path d="M1 1 L4.5 4.5 L1 8" fill="none" stroke="#999" stroke-width="1"/></svg>
<svg style="left:1000px;top:737px;" width="12" height="11" viewBox="0 0 12 11"><path d="M0.8 0.8 H10.8 L5.8 10 Z" fill="#d9b3b8"/></svg>
<div class="t" style="left:1023.6px;top:727.22px;font-size:17.5px;line-height:22px;color:#f0f0f0;">3D Mapping</div>
<div class="t" style="left:1281.6px;top:768.62px;font-size:17.5px;line-height:22px;color:#e8e8e8;">3D Mappin</div>
<div class="t" style="left:1008.4px;top:816.52px;font-size:17.5px;line-height:22px;color:#e8e8e8;">Mapping:</div>
<div class="a" style="left:1099px;top:812.9px;width:270px;height:29.8px;background:#2b2b2b;border-radius:5px 0 0 5px;"></div>
<div class="t" style="left:1110px;top:816.52px;font-size:17.5px;line-height:22px;color:#e8e8e8;">Global</div>
<div class="t" style="left:1008.4px;top:857.02px;font-size:17.5px;line-height:22px;color:#e8e8e8;">Translate:</div>
<div class="t" style="left:1141.6px;top:857.02px;font-size:17.5px;line-height:22px;color:#e8e8e8;">Rotate:</div>
<div class="t" style="left:1275px;top:857.02px;font-size:17.5px;line-height:22px;color:#e8e8e8;">Scale:</div>
<div class="a" style="left:1002.9px;top:886.2px;width:118.2px;height:94.5px;background:#4a7b2e;border-radius:6px;"></div>
<div class="a" style="left:1002.9px;top:915.8px;width:118.2px;height:1.2px;background:#3d6726;"></div>
<div class="a" style="left:1002.9px;top:947.6px;width:118.2px;height:1.2px;background:#3d6726;"></div>
<div class="t" style="left:1030.0px;width:80px;text-align:center;top:889.22px;font-size:17.5px;line-height:22px;color:#f0f0f0;">0.13 m</div>
<div class="t" style="left:1023.0px;width:20px;text-align:center;top:921.02px;font-size:17.5px;line-height:22px;color:#f0f0f0;">Y</div>
<div class="t" style="left:1056.0px;width:50px;text-align:center;top:921.02px;font-size:17.5px;line-height:22px;color:#f0f0f0;">0 m</div>
<div class="t" style="left:1023.0px;width:20px;text-align:center;top:953.22px;font-size:17.5px;line-height:22px;color:#f0f0f0;">Z</div>
<div class="t" style="left:1056.0px;width:50px;text-align:center;top:953.22px;font-size:17.5px;line-height:22px;color:#f0f0f0;">0 m</div>
<div class="a" style="left:1136px;top:886.2px;width:118.9px;height:94.5px;background:#565656;border-radius:6px;"></div>
<div class="a" style="left:1136px;top:915.8px;width:118.9px;height:1.2px;background:#474747;"></div>
<div class="a" style="left:1136px;top:947.6px;width:118.9px;height:1.2px;background:#474747;"></div>
<div class="t" style="left:1156.0px;width:20px;text-align:center;top:889.22px;font-size:17.5px;line-height:22px;color:#f0f0f0;">X</div>
<div class="t" style="left:1202.7px;width:40px;text-align:center;top:889.22px;font-size:17.5px;line-height:22px;color:#f0f0f0;">0°</div>
<div class="t" style="left:1156.0px;width:20px;text-align:center;top:921.02px;font-size:17.5px;line-height:22px;color:#f0f0f0;">Y</div>
<div class="t" style="left:1202.7px;width:40px;text-align:center;top:921.02px;font-size:17.5px;line-height:22px;color:#f0f0f0;">0°</div>
<div class="t" style="left:1156.0px;width:20px;text-align:center;top:953.22px;font-size:17.5px;line-height:22px;color:#f0f0f0;">Z</div>
<div class="t" style="left:1202.7px;width:40px;text-align:center;top:953.22px;font-size:17.5px;line-height:22px;color:#f0f0f0;">0°</div>
<div class="a" style="left:1270px;top:886.2px;width:96px;height:94.5px;overflow:hidden"><div class="a" style="left:0;top:0;width:130px;height:94.5px;background:#565656;border-radius:6px"></div><div class="a" style="left:0;top:29.6px;width:130px;height:1.2px;background:#474747"></div><div class="a" style="left:0;top:61.4px;width:130px;height:1.2px;background:#474747"></div></div>
<div class="t" style="left:1289.6px;width:20px;text-align:center;top:889.22px;font-size:17.5px;line-height:22px;color:#f0f0f0;">X</div>
<div class="t" style="left:1331px;top:889.22px;font-size:17.5px;line-height:22px;color:#f0f0f0;">1.00</div>
<div class="t" style="left:1289.6px;width:20px;text-align:center;top:921.02px;font-size:17.5px;line-height:22px;color:#f0f0f0;">Y</div>
<div class="t" style="left:1331px;top:921.02px;font-size:17.5px;line-height:22px;color:#f0f0f0;">1.00</div>
<div class="t" style="left:1289.6px;width:20px;text-align:center;top:953.22px;font-size:17.5px;line-height:22px;color:#f0f0f0;">Z</div>
<div class="t" style="left:1331px;top:953.22px;font-size:17.5px;line-height:22px;color:#f0f0f0;">1.00</div>
<div class="a" style="left:1275px;top:991px;width:20px;height:19.7px;background:#5a5a5a;border-radius:4px;"></div>
<div class="t" style="left:1308.4px;top:988.72px;font-size:17.5px;line-height:22px;color:#f0f0f0;">Uniform</div>
<div class="t" style="left:954.4px;top:979.20px;font-size:11.5px;line-height:14px;color:#f0f0f0;">MetaliC_Volcan</div>
<div class="a" style="left:1366px;top:672px;width:200px;height:347px;background:#414141;"></div>
<div class="a" style="left:1366px;top:674.7px;width:200px;height:23.5px;background:#3d3d3d;"></div>
<div class="a" style="left:1366px;top:698.2px;width:200px;height:65.6px;background:#383838;"></div>
<svg style="left:1374px;top:683px;" width="10" height="8" viewBox="0 0 10 8"><path d="M0.5 0.5 H8.5 L4.5 7 Z" fill="#bbb"/></svg>
<div class="t" style="left:1388.2px;top:678.47px;font-size:12.5px;line-height:16px;color:#e8e8e8;">Active Tool</div>
<svg style="left:1547px;top:683px;" width="10" height="6" viewBox="0 0 10 6"><path d="M1 1h1v1h-1zM3 1h1v1h-1zM5 1h1v1h-1zM7 1h1v1h-1zM1 4h1v1h-1zM3 4h1v1h-1zM5 4h1v1h-1zM7 4h1v1h-1z" fill="#777"/></svg>
<svg style="left:1380.7px;top:704.7px;" width="23" height="23" viewBox="0 0 23 23"><rect x="1" y="1" width="21" height="21" fill="none" stroke="#f2a51e" stroke-width="1.3" stroke-dasharray="3 2"/><path d="M8.5 6 V16 L11 13.5 L15 13 Z" fill="#e8e8e8"/></svg>
<div class="t" style="left:1410.4px;top:708.90px;font-size:11.5px;line-height:14px;color:#e0e0e0;">Select Box</div>
<div class="a" style="left:1375px;top:737.2px;width:56px;height:17.6px;background:#595959;border-radius:4px;"></div>
<div class="a" style="left:1375px;top:737.2px;width:18.5px;height:17.6px;background:#5680c2;border-radius:4px 0 0 4px;"></div>
<div class="a" style="left:1393.5px;top:737.2px;width:1px;height:17.6px;background:#484848;"></div>
<div class="a" style="left:1412.5px;top:737.2px;width:1px;height:17.6px;background:#484848;"></div>
<svg style="left:1376px;top:738px;" width="17" height="16" viewBox="0 0 17 16"><rect x="2.5" y="2.5" width="12" height="11" fill="none" stroke="#fff" stroke-width="1.2" stroke-dasharray="2 1.6"/></svg>
<svg style="left:1395px;top:738px;" width="17" height="16" viewBox="0 0 17 16"><path d="M6 2 H15 V10 H11 V14 H2 V6 H6 Z" fill="#d0d0d0"/></svg>
<svg style="left:1414px;top:738px;" width="17" height="16" viewBox="0 0 17 16"><path d="M6 2 H15 V10 H11 V6 H6 Z" fill="#d0d0d0"/><path d="M2.5 6.5 V13.5 H10.5" fill="none" stroke="#d0d0d0" stroke-width="1.2" stroke-dasharray="2 1.5"/></svg>
<div class="a" style="left:1566px;top:672px;width:19px;height:347px;background:#2a2a2a;border-radius:0 0 6px 0;"></div>
<div class="a" style="left:1566px;top:680px;width:16.4px;height:33px;background:#353535;border-radius:0 4px 4px 0;"></div>
<div class="t" style="left:1544.2px;top:689.5px;width:60px;height:14px;line-height:14px;text-align:center;font-size:11px;color:#e0e0e0;transform:rotate(-90deg)">Item</div>
<div class="a" style="left:1566px;top:719.7px;width:16.4px;height:30.0px;background:#4a4a4a;border-radius:0 4px 4px 0;"></div>
<div class="t" style="left:1544.2px;top:727.7px;width:60px;height:14px;line-height:14px;text-align:center;font-size:11px;color:#e0e0e0;transform:rotate(-90deg)">Tool</div>
<div class="a" style="left:1566px;top:756px;width:16.4px;height:34px;background:#353535;border-radius:0 4px 4px 0;"></div>
<div class="t" style="left:1544.2px;top:766.0px;width:60px;height:14px;line-height:14px;text-align:center;font-size:11px;color:#e0e0e0;transform:rotate(-90deg)">View</div>
<div class="a" style="left:1566px;top:796.6px;width:16.4px;height:48.39999999999998px;background:#353535;border-radius:0 4px 4px 0;"></div>
<div class="t" style="left:1544.2px;top:813.8px;width:60px;height:14px;line-height:14px;text-align:center;font-size:11px;color:#e0e0e0;transform:rotate(-90deg)">Options</div>
<!-- sec_out -->
<div class="a" style="left:1523px;top:27px;width:191px;height:18.200000000000003px;background:#2b2b2b;border-radius:4px;"></div>
<svg style="left:1527px;top:28px;" width="20" height="17" viewBox="0 0 20 17"><path d="M6 2 C4 6 2 8 2 11 C2 13.5 4 15 6 15 C8 15 10 13.5 10 11 C10 8 8 6 6 2Z" fill="#e0e0e0"/><circle cx="13" cy="4.5" r="2.3" fill="#e0e0e0"/><circle cx="12" cy="12" r="4" fill="#2b2b2b" stroke="#e0e0e0" stroke-width="1.2"/><path d="M12 10 V12 H13.5" stroke="#e0e0e0" stroke-width="0.9" fill="none"/></svg>
<svg style="left:1544px;top:33px;" width="8" height="6" viewBox="0 0 8 6"><path d="M1 1.5 L4 4.5 L7 1.5" fill="none" stroke="#a0a0a0" stroke-width="1.4" stroke-linecap="round" stroke-linejoin="round"/></svg>
<div class="a" style="left:1554.5px;top:27px;width:120px;height:18.2px;background:#1d1d1d;"></div>
<div class="t" style="left:1562.5px;top:29.20px;font-size:11.5px;line-height:14px;color:#e0e0e0;">Scene</div>
<div class="a" style="left:1674.5px;top:27px;width:19.5px;height:18.2px;background:#565656;"></div>
<svg style="left:1676px;top:28px;" width="17" height="17" viewBox="0 0 17 17"><path d="M5.5 4.5 V2 H11.5 L14 4.5 V12 H11.5" fill="none" stroke="#e0e0e0" stroke-width="1"/><path d="M2.5 5 H9 L11.5 7.5 V15 H2.5 Z" fill="none" stroke="#e0e0e0" stroke-width="1"/></svg>
<svg style="left:1695px;top:28px;" width="17" height="17" viewBox="0 0 17 17"><path d="M4.5 4.5 L12.5 12.5 M12.5 4.5 L4.5 12.5" stroke="#777" stroke-width="1.1"/></svg>
<div class="a" style="left:1720.2px;top:27px;width:190.79999999999995px;height:18.200000000000003px;background:#2b2b2b;border-radius:4px;"></div>
<svg style="left:1724px;top:28px;" width="20" height="17" viewBox="0 0 20 17"><rect x="5.5" y="2" width="10" height="9" fill="none" stroke="#e0e0e0" stroke-width="1"/><path d="M6.5 10.5 L9.5 6 L12 10.5Z" fill="#e0e0e0"/><circle cx="13" cy="4.5" r="1" fill="#e0e0e0"/><path d="M3.5 4 V13 H13.5 M1.5 6 V15 H11.5" fill="none" stroke="#e0e0e0" stroke-width="1"/></svg>
<svg style="left:1741px;top:33px;" width="8" height="6" viewBox="0 0 8 6"><path d="M1 1.5 L4 4.5 L7 1.5" fill="none" stroke="#a0a0a0" stroke-width="1.4" stroke-linecap="round" stroke-linejoin="round"/></svg>
<div class="a" style="left:1751px;top:27px;width:120.5px;height:18.2px;background:#1d1d1d;"></div>
<div class="t" style="left:1759.1px;top:29.20px;font-size:11.5px;line-height:14px;color:#e0e0e0;">View Layer</div>
<div class="a" style="left:1871.5px;top:27px;width:19.5px;height:18.2px;background:#565656;"></div>
<svg style="left:1873px;top:28px;" width="17" height="17" viewBox="0 0 17 17"><path d="M5.5 4.5 V2 H11.5 L14 4.5 V12 H11.5" fill="none" stroke="#e0e0e0" stroke-width="1"/><path d="M2.5 5 H9 L11.5 7.5 V15 H2.5 Z" fill="none" stroke="#e0e0e0" stroke-width="1"/></svg>
<svg style="left:1892px;top:28px;" width="17" height="17" viewBox="0 0 17 17"><path d="M4.5 4.5 L12.5 12.5 M12.5 4.5 L4.5 12.5" stroke="#777" stroke-width="1.1"/></svg>
<div class="a" style="left:1588px;top:50px;width:331px;height:311px;border-radius:6px;overflow:hidden;background:#282828">
<div class="a" style="left:0px;top:25.5px;width:332px;height:20px;background:#282828;"></div>
<div class="a" style="left:0px;top:45.5px;width:332px;height:20px;background:#2d2d2d;"></div>
<div class="a" style="left:0px;top:65.5px;width:332px;height:20px;background:#282828;"></div>
<div class="a" style="left:0px;top:85.5px;width:332px;height:20px;background:#2d2d2d;"></div>
<div class="a" style="left:0px;top:105.5px;width:332px;height:20px;background:#282828;"></div>
<div class="a" style="left:0px;top:125.5px;width:332px;height:20px;background:#2d2d2d;"></div>
<div class="a" style="left:0px;top:145.5px;width:332px;height:20px;background:#282828;"></div>
<div class="a" style="left:0px;top:165.5px;width:332px;height:20px;background:#2d2d2d;"></div>
<div class="a" style="left:0px;top:185.5px;width:332px;height:20px;background:#282828;"></div>
<div class="a" style="left:0px;top:205.5px;width:332px;height:20px;background:#2d2d2d;"></div>
<div class="a" style="left:0px;top:225.5px;width:332px;height:20px;background:#282828;"></div>
<div class="a" style="left:0px;top:245.5px;width:332px;height:20px;background:#2d2d2d;"></div>
<div class="a" style="left:0px;top:265.5px;width:332px;height:20px;background:#282828;"></div>
<div class="a" style="left:0px;top:285.5px;width:332px;height:20px;background:#2d2d2d;"></div>
<div class="a" style="left:0px;top:305.5px;width:332px;height:20px;background:#282828;"></div>
<div class="a" style="left:0px;top:0px;width:332px;height:25px;background:#303030;"></div>
<div class="a" style="left:0px;top:145.8px;width:332px;height:20px;background:#3b5689;"></div>
</div>
<div class="a" style="left:1596.9px;top:53.4px;width:30.09999999999991px;height:17.800000000000004px;background:#282828;border-radius:4px;"></div>
<svg style="left:1599px;top:54px;" width="17" height="17" viewBox="0 0 17 17"><rect x="2" y="2" width="5" height="3" fill="#e0e0e0"/><path d="M3.5 5 V13.5 H6" fill="none" stroke="#e0e0e0" stroke-width="1"/><rect x="7" y="8" width="7" height="2.6" fill="#e0e0e0"/><rect x="7" y="12" width="7" height="2.6" fill="#e0e0e0"/></svg>
<svg style="left:1617px;top:59px;" width="8" height="6" viewBox="0 0 8 6"><path d="M1 1.5 L4 4.5 L7 1.5" fill="none" stroke="#a0a0a0" stroke-width="1.4" stroke-linecap="round" stroke-linejoin="round"/></svg>
<div class="a" style="left:1634.2px;top:53.4px;width:30.200000000000045px;height:17.800000000000004px;background:#282828;border-radius:4px;"></div>
<svg style="left:1637px;top:54px;" width="17" height="17" viewBox="0 0 17 17"><rect x="5.5" y="2" width="10" height="9" fill="none" stroke="#e0e0e0" stroke-width="1"/><path d="M6.5 10.5 L9.5 6 L12 10.5Z" fill="#e0e0e0"/><circle cx="13" cy="4.5" r="1" fill="#e0e0e0"/><path d="M3.5 4 V13 H13.5 M1.5 6 V15 H11.5" fill="none" stroke="#e0e0e0" stroke-width="1"/></svg>
<svg style="left:1655px;top:59px;" width="8" height="6" viewBox="0 0 8 6"><path d="M1 1.5 L4 4.5 L7 1.5" fill="none" stroke="#a0a0a0" stroke-width="1.4" stroke-linecap="round" stroke-linejoin="round"/></svg>
<div class="a" style="left:1688px;top:53.4px;width:109px;height:17.800000000000004px;background:#1d1d1d;border-radius:4px;"></div>
<svg style="left:1691px;top:54px;" width="17" height="17" viewBox="0 0 17 17"><circle cx="9.5" cy="6.5" r="4.2" fill="none" stroke="#e0e0e0" stroke-width="1.1"/><path d="M6.5 9.5 L2 14.5" stroke="#e0e0e0" stroke-width="1.1"/></svg>
<div class="a" style="left:1855.8px;top:53.4px;width:30.200000000000045px;height:17.800000000000004px;background:#282828;border-radius:4px;"></div>
<svg style="left:1858px;top:54px;" width="17" height="17" viewBox="0 0 17 17"><path d="M2 3 H14 L9.5 8.5 V14.5 L6.5 12.5 V8.5 Z" fill="none" stroke="#e0e0e0" stroke-width="1.1"/></svg>
<svg style="left:1877px;top:59px;" width="8" height="6" viewBox="0 0 8 6"><path d="M1 1.5 L4 4.5 L7 1.5" fill="none" stroke="#a0a0a0" stroke-width="1.4" stroke-linecap="round" stroke-linejoin="round"/></svg>
<div class="a" style="left:1893px;top:53.4px;width:18px;height:17.800000000000004px;background:#4a4a4a;border-radius:4px;"></div>
<svg style="left:1894px;top:54px;" width="17" height="17" viewBox="0 0 17 17"><rect x="2" y="6" width="10" height="2.5" fill="none" stroke="#e0e0e0" stroke-width="1"/><path d="M3 8.5 V15 H11 V8.5 M6 11 H8" fill="none" stroke="#e0e0e0" stroke-width="1"/><circle cx="12.5" cy="4.5" r="3.5" fill="#e0e0e0"/><path d="M12.5 2.5 V6.5 M10.5 4.5 H14.5" stroke="#4a4a4a" stroke-width="1"/></svg>
<svg style="left:1610px;top:78px;" width="16" height="16" viewBox="0 0 16 16"><rect x="1.5" y="2" width="13" height="3" fill="none" stroke="#e0e0e0" stroke-width="1.1"/><path d="M2.5 5 V14.5 H13.5 V5" fill="none" stroke="#e0e0e0" stroke-width="1.1"/><rect x="6.5" y="8" width="3" height="1.4" fill="#e0e0e0"/></svg>
<div class="t" style="left:1632.5px;top:80.20px;font-size:11.5px;line-height:14px;color:#e0e0e0;">Scene Collection</div>
<svg style="left:1614px;top:104px;" width="8" height="7" viewBox="0 0 8 7"><path d="M0.5 0.5 H7 L3.75 6 Z" fill="#bbb"/></svg>
<div class="a" style="left:1632.8px;top:101px;width:10.4px;height:9.8px;background:#e0e0e0;border-radius:1.5px;"></div>
<svg style="left:1633px;top:101px;" width="11" height="10" viewBox="0 0 11 10"><path d="M2 5 L4.5 7.5 L9 2.5" fill="none" stroke="#222" stroke-width="1.6"/></svg>
<div class="a" style="left:1648px;top:96.8px;width:20px;height:18.2px;background:#404040;border-radius:4px;border:1px solid #555;"></div>
<svg style="left:1650px;top:98px;" width="16" height="16" viewBox="0 0 16 16"><rect x="1.5" y="2" width="13" height="3" fill="none" stroke="#e0e0e0" stroke-width="1.1"/><path d="M2.5 5 V14.5 H13.5 V5" fill="none" stroke="#e0e0e0" stroke-width="1.1"/><rect x="6.5" y="8" width="3" height="1.4" fill="#e0e0e0"/></svg>
<div class="t" style="left:1672.4px;top:100.00px;font-size:11.5px;line-height:14px;color:#e0e0e0;">Collection</div>
<svg style="left:1894.5px;top:99.5px;" width="16" height="12" viewBox="0 0 16 12"><path d="M1 6 C4 1 12 1 15 6 C12 11 4 11 1 6 Z" fill="none" stroke="#e8e8e8" stroke-width="1.4"/><circle cx="8" cy="6" r="2.4" fill="#e8e8e8"/></svg>
<div class="a" style="left:1636.7px;top:111px;width:1px;height:155px;background:#777;"></div>
<div class="a" style="left:1637px;top:126.1px;width:14px;height:1px;background:#888;"></div>
<svg style="left:1634.9px;top:123.1px;" width="7" height="7" viewBox="0 0 7 7"><path d="M0.5 0.5 L6 3.5 L0.5 6.5 Z" fill="#ccc"/></svg>
<div class="t" style="left:1672.4px;top:119.80px;font-size:11.5px;line-height:14px;color:#e0e0e0;">Camera</div>
<svg style="left:1894.5px;top:119.1px;" width="16" height="12" viewBox="0 0 16 12"><path d="M1 6 C4 1 12 1 15 6 C12 11 4 11 1 6 Z" fill="none" stroke="#e8e8e8" stroke-width="1.4"/><circle cx="8" cy="6" r="2.4" fill="#e8e8e8"/></svg>
<div class="a" style="left:1637px;top:146.1px;width:14px;height:1px;background:#888;"></div>
<svg style="left:1634.9px;top:143.1px;" width="7" height="7" viewBox="0 0 7 7"><path d="M0.5 0.5 L6 3.5 L0.5 6.5 Z" fill="#ccc"/></svg>
<div class="t" style="left:1672.4px;top:139.80px;font-size:11.5px;line-height:14px;color:#e0e0e0;">Camera.001</div>
<svg style="left:1894.5px;top:139.1px;" width="16" height="12" viewBox="0 0 16 12"><path d="M1 6 C4 1 12 1 15 6 C12 11 4 11 1 6 Z" fill="none" stroke="#e8e8e8" stroke-width="1.4"/><circle cx="8" cy="6" r="2.4" fill="#e8e8e8"/></svg>
<div class="a" style="left:1637px;top:166.1px;width:14px;height:1px;background:#888;"></div>
<div class="t" style="left:1672.4px;top:159.80px;font-size:11.5px;line-height:14px;color:#e0e0e0;">Empty</div>
<svg style="left:1894.5px;top:159.1px;" width="16" height="12" viewBox="0 0 16 12"><path d="M1 6 C4 1 12 1 15 6 C12 11 4 11 1 6 Z" fill="none" stroke="#e8e8e8" stroke-width="1.4"/><circle cx="8" cy="6" r="2.4" fill="#e8e8e8"/></svg>
<div class="a" style="left:1637px;top:186.1px;width:14px;height:1px;background:#888;"></div>
<svg style="left:1634.9px;top:183.1px;" width="7" height="7" viewBox="0 0 7 7"><path d="M0.5 0.5 L6 3.5 L0.5 6.5 Z" fill="#ccc"/></svg>
<div class="t" style="left:1672.4px;top:179.80px;font-size:11.5px;line-height:14px;color:#e0e0e0;">Lattice</div>
<svg style="left:1894.5px;top:179.1px;" width="16" height="12" viewBox="0 0 16 12"><path d="M1 6 C4 1 12 1 15 6 C12 11 4 11 1 6 Z" fill="none" stroke="#e8e8e8" stroke-width="1.4"/><circle cx="8" cy="6" r="2.4" fill="#e8e8e8"/></svg>
<div class="a" style="left:1637px;top:206.1px;width:14px;height:1px;background:#888;"></div>
<svg style="left:1634.9px;top:203.1px;" width="7" height="7" viewBox="0 0 7 7"><path d="M0.5 0.5 L6 3.5 L0.5 6.5 Z" fill="#ccc"/></svg>
<div class="t" style="left:1672.4px;top:199.80px;font-size:11.5px;line-height:14px;color:#f5b442;">Plane</div>
<svg style="left:1894.5px;top:199.1px;" width="16" height="12" viewBox="0 0 16 12"><path d="M1 6 C4 1 12 1 15 6 C12 11 4 11 1 6 Z" fill="none" stroke="#e8e8e8" stroke-width="1.4"/><circle cx="8" cy="6" r="2.4" fill="#e8e8e8"/></svg>
<div class="a" style="left:1637px;top:226.1px;width:14px;height:1px;background:#888;"></div>
<svg style="left:1634.9px;top:223.1px;" width="7" height="7" viewBox="0 0 7 7"><path d="M0.5 0.5 L6 3.5 L0.5 6.5 Z" fill="#ccc"/></svg>
<div class="t" style="left:1672.4px;top:219.80px;font-size:11.5px;line-height:14px;color:#e0e0e0;">Plane.001</div>
<svg style="left:1894.5px;top:219.1px;" width="16" height="12" viewBox="0 0 16 12"><path d="M1 6 C4 1 12 1 15 6 C12 11 4 11 1 6 Z" fill="none" stroke="#e8e8e8" stroke-width="1.4"/><circle cx="8" cy="6" r="2.4" fill="#e8e8e8"/></svg>
<div class="a" style="left:1637px;top:246.1px;width:14px;height:1px;background:#888;"></div>
<svg style="left:1634.9px;top:243.1px;" width="7" height="7" viewBox="0 0 7 7"><path d="M0.5 0.5 L6 3.5 L0.5 6.5 Z" fill="#ccc"/></svg>
<div class="t" style="left:1672.4px;top:239.80px;font-size:11.5px;line-height:14px;color:#e0e0e0;">Spot</div>
<svg style="left:1894.5px;top:239.1px;" width="16" height="12" viewBox="0 0 16 12"><path d="M1 6 C4 1 12 1 15 6 C12 11 4 11 1 6 Z" fill="none" stroke="#e8e8e8" stroke-width="1.4"/><circle cx="8" cy="6" r="2.4" fill="#e8e8e8"/></svg>
<div class="a" style="left:1637px;top:266.1px;width:14px;height:1px;background:#555;"></div>
<svg style="left:1634.9px;top:263.1px;" width="7" height="7" viewBox="0 0 7 7"><path d="M0.5 0.5 L6 3.5 L0.5 6.5 Z" fill="#666"/></svg>
<div class="t" style="left:1672.4px;top:259.80px;font-size:11.5px;line-height:14px;color:#7a7a7a;">Spot.001</div>
<svg style="left:1894.5px;top:263.1px;" width="16" height="8" viewBox="0 0 16 8"><path d="M1 2 C5 7 11 7 15 2" fill="none" stroke="#bbb" stroke-width="1.3"/></svg>
<svg style="left:1649.8px;top:117.6px;" width="17" height="17" viewBox="0 0 17 17"><circle cx="5" cy="4.5" r="3.6" fill="#e59853"/><circle cx="11.5" cy="4" r="3.6" fill="#e59853"/><rect x="3" y="8.5" width="9.5" height="6.5" fill="#e59853"/><path d="M12 11.5 L16 8.5 V15.5 Z" fill="#e59853"/><path d="M1 10.5 H3 M1 13 H3" stroke="#e59853" stroke-width="1.2"/><circle cx="5" cy="4.5" r="1" fill="#2a2a2a"/><circle cx="11.5" cy="4" r="1" fill="#2a2a2a"/></svg>
<div class="a" style="left:1731px;top:116.9px;width:20px;height:18.1px;background:#555;border-radius:4px;"></div>
<svg style="left:1733px;top:118px;" width="17" height="17" viewBox="0 0 17 17"><path d="M2.5 7.5 C1 4 5 1 8 3.5 C9.5 0.5 15 1 14.5 5 C14.3 7 12.5 8 10 8 Z" fill="none" stroke="#2fc9a0" stroke-width="1.2"/><circle cx="11.5" cy="4.5" r="1" fill="#2fc9a0"/><rect x="4" y="10" width="7.5" height="5" fill="none" stroke="#2fc9a0" stroke-width="1.2"/><path d="M11.5 12.5 L15.5 10 V15.5 Z M1.5 10.5 V15" fill="none" stroke="#2fc9a0" stroke-width="1.2"/></svg>
<svg style="left:1649.8px;top:137.6px;" width="17" height="17" viewBox="0 0 17 17"><circle cx="5" cy="4.5" r="3.6" fill="#e59853"/><circle cx="11.5" cy="4" r="3.6" fill="#e59853"/><rect x="3" y="8.5" width="9.5" height="6.5" fill="#e59853"/><path d="M12 11.5 L16 8.5 V15.5 Z" fill="#e59853"/><path d="M1 10.5 H3 M1 13 H3" stroke="#e59853" stroke-width="1.2"/><circle cx="5" cy="4.5" r="1" fill="#2a2a2a"/><circle cx="11.5" cy="4" r="1" fill="#2a2a2a"/></svg>
<svg style="left:1757.8px;top:138px;" width="17" height="17" viewBox="0 0 17 17"><path d="M2.5 7.5 C1 4 5 1 8 3.5 C9.5 0.5 15 1 14.5 5 C14.3 7 12.5 8 10 8 Z" fill="none" stroke="#2fc9a0" stroke-width="1.2"/><circle cx="11.5" cy="4.5" r="1" fill="#2fc9a0"/><rect x="4" y="10" width="7.5" height="5" fill="none" stroke="#2fc9a0" stroke-width="1.2"/><path d="M11.5 12.5 L15.5 10 V15.5 Z M1.5 10.5 V15" fill="none" stroke="#2fc9a0" stroke-width="1.2"/></svg>
<svg style="left:1650px;top:157px;" width="17" height="17" viewBox="0 0 17 17"><path d="M8.5 9 V2 M8.5 9 L2 14 M8.5 9 L15 12" stroke="#e59853" stroke-width="2.6" stroke-linecap="round"/></svg>
<svg style="left:1650px;top:177px;" width="17" height="17" viewBox="0 0 17 17"><path d="M4 2.5 H8 L5.5 7.5 H1.5 Z M10 2.5 H14 L11.5 7.5 H7.5 Z M3 9.5 H7 L4.5 14.5 H0.5 Z M9 9.5 H13 L10.5 14.5 H6.5 Z" fill="#e59853"/></svg>
<svg style="left:1730px;top:177px;" width="17" height="17" viewBox="0 0 17 17"><path d="M3.5 2.5 H14.5 L13.5 15 H2.5 Z M3 9 H14 M8.5 2.5 L8 15" fill="none" stroke="#2fc9a0" stroke-width="1.2"/><rect x="1.5" y="1" width="3" height="3" fill="none" stroke="#2fc9a0" stroke-width="1"/></svg>
<div class="a" style="left:1648px;top:196.5px;width:20px;height:18.5px;background:#5a74a4;border-radius:4px;border:1px solid #7088b8;"></div>
<svg style="left:1650px;top:197px;" width="17" height="17" viewBox="0 0 17 17"><path d="M2.5 3 H14.5 L8.5 15 Z" fill="none" stroke="#e59853" stroke-width="2.6" stroke-linejoin="round"/></svg>
<svg style="left:1650px;top:217px;" width="17" height="17" viewBox="0 0 17 17"><path d="M2.5 3 H14.5 L8.5 15 Z" fill="none" stroke="#e59853" stroke-width="2.6" stroke-linejoin="round"/></svg>
<svg style="left:1721.7px;top:197px;" width="17" height="17" viewBox="0 0 17 17"><path d="M2 3.5 H5.5 C7.5 3.5 7.5 5 6.5 6.5 L5 9 C4 10.5 5 12 7 12 H13" fill="none" stroke="#ddd" stroke-width="1.2"/><path d="M11 9.5 L14 12 L11 14.5" fill="none" stroke="#ddd" stroke-width="1.2"/></svg>
<svg style="left:1741.5px;top:196.5px;" width="17" height="17" viewBox="0 0 17 17"><path d="M2.2 12.8 L7.4 7.6 C6.6 5.2 7.8 2.2 11 1.6 C11.8 1.5 12.6 1.5 13.4 1.8 L10.6 4.6 L11.2 6.4 L13 7 L15.8 4.2 C16.1 5 16.1 5.8 16 6.6 C15.4 9.8 12.4 11 10 10.2 L4.8 15.4 C4 16.2 3 16.2 2.2 15.4 C1.4 14.6 1.4 13.6 2.2 12.8 Z" fill="none" stroke="#7ea6e6" stroke-width="1.2"/></svg>
<svg style="left:1762px;top:197px;" width="17" height="17" viewBox="0 0 17 17"><path d="M3 3.5 H14 L8.5 14 Z" fill="none" stroke="#2fc9a0" stroke-width="1.2"/><rect x="1.5" y="2" width="3" height="3" fill="#282828" stroke="#2fc9a0" stroke-width="1"/><rect x="12.5" y="2" width="3" height="3" fill="#282828" stroke="#2fc9a0" stroke-width="1"/><rect x="7" y="12.5" width="3" height="3" fill="#282828" stroke="#2fc9a0" stroke-width="1"/></svg>
<svg style="left:1745.7px;top:216.5px;" width="17" height="17" viewBox="0 0 17 17"><path d="M2.2 12.8 L7.4 7.6 C6.6 5.2 7.8 2.2 11 1.6 C11.8 1.5 12.6 1.5 13.4 1.8 L10.6 4.6 L11.2 6.4 L13 7 L15.8 4.2 C16.1 5 16.1 5.8 16 6.6 C15.4 9.8 12.4 11 10 10.2 L4.8 15.4 C4 16.2 3 16.2 2.2 15.4 C1.4 14.6 1.4 13.6 2.2 12.8 Z" fill="none" stroke="#7ea6e6" stroke-width="1.2"/></svg>
<svg style="left:1766px;top:217px;" width="17" height="17" viewBox="0 0 17 17"><path d="M3 3.5 H14 L8.5 14 Z" fill="none" stroke="#2fc9a0" stroke-width="1.2"/><rect x="1.5" y="2" width="3" height="3" fill="#282828" stroke="#2fc9a0" stroke-width="1"/><rect x="12.5" y="2" width="3" height="3" fill="#282828" stroke="#2fc9a0" stroke-width="1"/><rect x="7" y="12.5" width="3" height="3" fill="#282828" stroke="#2fc9a0" stroke-width="1"/></svg>
<svg style="left:1650px;top:237px;" width="17" height="17" viewBox="0 0 17 17"><circle cx="8.5" cy="7" r="5.5" fill="#e59853"/><rect x="5.5" y="12" width="6" height="1.4" fill="#e59853"/><rect x="6" y="14.3" width="5" height="1.4" fill="#e59853"/><path d="M6 6 L8 8 M11 6 L9 8" stroke="#2a2a2a" stroke-width="1"/></svg>
<svg style="left:1717.5px;top:237px;" width="17" height="17" viewBox="0 0 17 17"><path d="M2 3.5 H5.5 C7.5 3.5 7.5 5 6.5 6.5 L5 9 C4 10.5 5 12 7 12 H13" fill="none" stroke="#ddd" stroke-width="1.2"/><path d="M11 9.5 L14 12 L11 14.5" fill="none" stroke="#ddd" stroke-width="1.2"/></svg>
<svg style="left:1737px;top:237px;" width="17" height="17" viewBox="0 0 17 17"><path d="M2 15 L5.5 11.5 M5.5 11.5 C3 8 6 2.5 13.5 2 C13.5 9 9 13 5.5 11.5 Z M8 9 L12 5" fill="none" stroke="#2fc9a0" stroke-width="1.2"/></svg>
<svg style="left:1650px;top:257px;" width="17" height="17" viewBox="0 0 17 17"><circle cx="8.5" cy="7" r="5.5" fill="#8a6040"/><rect x="5.5" y="12" width="6" height="1.4" fill="#8a6040"/><rect x="6" y="14.3" width="5" height="1.4" fill="#8a6040"/></svg>
<svg style="left:1741px;top:257px;" width="17" height="17" viewBox="0 0 17 17"><path d="M2 3.5 H5.5 C7.5 3.5 7.5 5 6.5 6.5 L5 9 C4 10.5 5 12 7 12 H13" fill="none" stroke="#777" stroke-width="1.2"/><path d="M11 9.5 L14 12 L11 14.5" fill="none" stroke="#777" stroke-width="1.2"/></svg>
<svg style="left:1760.6px;top:257px;" width="17" height="17" viewBox="0 0 17 17"><path d="M2 15 L5.5 11.5 M5.5 11.5 C3 8 6 2.5 13.5 2 C13.5 9 9 13 5.5 11.5 Z M8 9 L12 5" fill="none" stroke="#2a8870" stroke-width="1.2"/></svg>
<div class="a" style="left:1588px;top:362.5px;width:332px;height:656px;border-radius:6px;overflow:hidden;background:#424242">
<div class="a" style="left:0px;top:0px;width:332px;height:27px;background:#303030;"></div>
<div class="a" style="left:0px;top:27px;width:28px;height:629px;background:#232323;"></div>
</div>
<!-- sec_props -->
<div class="a" style="left:1588px;top:364px;width:331px;height:655px;background:#424242;border-radius:6px;"></div>
<div class="a" style="left:1588px;top:364px;width:331px;height:25.5px;background:#303030;border-radius:6px 6px 0 0;"></div>
<div class="a" style="left:1588px;top:389.5px;width:28px;height:629px;background:#232323;border-radius:0 0 0 6px;"></div>
<div class="a" style="left:1596.7px;top:367px;width:30.5px;height:18px;background:#282828;border-radius:4px;"></div>
<svg style="left:1599px;top:368px;" width="17" height="17" viewBox="0 0 17 17"><rect x="1.5" y="2" width="12" height="5" rx="2.5" fill="none" stroke="#e0e0e0" stroke-width="1.1"/><rect x="1.5" y="9.5" width="12" height="5" rx="2.5" fill="#e0e0e0"/><circle cx="4" cy="4.5" r="2.5" fill="#e0e0e0"/><circle cx="11" cy="12" r="2.5" fill="#282828"/></svg>
<svg style="left:1617px;top:373px;" width="8" height="6" viewBox="0 0 8 6"><path d="M1 1.5 L4 4.5 L7 1.5" fill="none" stroke="#a0a0a0" stroke-width="1.4" stroke-linecap="round" stroke-linejoin="round"/></svg>
<svg style="left:1640px;top:367px;" width="20" height="17" viewBox="0 0 20 17"><path d="M6 2 C4 6 2 8 2 11 C2 13.5 4 15 6 15 C8 15 10 13.5 10 11 C10 8 8 6 6 2Z" fill="#e0e0e0"/><circle cx="13" cy="4.5" r="2.3" fill="#e0e0e0"/><circle cx="12" cy="12" r="4" fill="#303030" stroke="#e0e0e0" stroke-width="1.2"/></svg>
<div class="t" style="left:1665.3px;top:369.20px;font-size:11.5px;line-height:14px;color:#e0e0e0;">Scene</div>
<svg style="left:1894px;top:368px;" width="17" height="17" viewBox="0 0 17 17"><path d="M10 2 L15 7 L13 8 L10.5 11 L11 13.5 L3.5 6 L6 6.5 L9 4 Z M6.5 10.5 L2 15" fill="none" stroke="#aaa" stroke-width="1"/></svg>
<div class="a" style="left:1590px;top:397.5px;width:26px;height:26.5px;background:#2c2c2c;border-radius:5px 0 0 5px;"></div>
<div class="a" style="left:1590px;top:433.6px;width:26px;height:26.399999999999977px;background:#2c2c2c;border-radius:5px 0 0 5px;"></div>
<div class="a" style="left:1590px;top:461.4px;width:26px;height:26.900000000000034px;background:#3d3d3d;border-radius:5px 0 0 5px;"></div>
<div class="a" style="left:1590px;top:489px;width:26px;height:27px;background:#2c2c2c;border-radius:5px 0 0 5px;"></div>
<div class="a" style="left:1590px;top:516.5px;width:26px;height:26.5px;background:#2c2c2c;border-radius:5px 0 0 5px;"></div>
<div class="a" style="left:1590px;top:543.5px;width:26px;height:26.5px;background:#2c2c2c;border-radius:5px 0 0 5px;"></div>
<div class="a" style="left:1590px;top:582px;width:26px;height:27px;background:#2c2c2c;border-radius:5px 0 0 5px;"></div>
<div class="a" style="left:1590px;top:609.5px;width:26px;height:26.5px;background:#2c2c2c;border-radius:5px 0 0 5px;"></div>
<div class="a" style="left:1590px;top:637px;width:26px;height:26.5px;background:#2c2c2c;border-radius:5px 0 0 5px;"></div>
<div class="a" style="left:1590px;top:664px;width:26px;height:27px;background:#2c2c2c;border-radius:5px 0 0 5px;"></div>
<div class="a" style="left:1590px;top:691.5px;width:26px;height:26.5px;background:#2c2c2c;border-radius:5px 0 0 5px;"></div>
<div class="a" style="left:1590px;top:718.5px;width:26px;height:26.5px;background:#2c2c2c;border-radius:5px 0 0 5px;"></div>
<div class="a" style="left:1590px;top:749.5px;width:26px;height:27.5px;background:#2c2c2c;border-radius:5px 0 0 5px;"></div>
<div class="a" style="left:1590px;top:785.8px;width:26px;height:26.200000000000045px;background:#2c2c2c;border-radius:5px 0 0 5px;"></div>
<svg style="left:1594px;top:402px;" width="18" height="18" viewBox="0 0 18 18"><path d="M5 3 V10" stroke="#e0e0e0" stroke-width="1.3"/><circle cx="5" cy="12" r="2.6" fill="#e0e0e0"/><path d="M11 16 V8 M8.5 2.5 V6 C8.5 7.5 13.5 7.5 13.5 6 V2.5" fill="none" stroke="#e0e0e0" stroke-width="1.6"/></svg>
<svg style="left:1594px;top:438px;" width="18" height="18" viewBox="0 0 18 18"><rect x="2" y="6" width="14" height="9" fill="none" stroke="#e0e0e0" stroke-width="1.3"/><path d="M5 3.5 H8 M10 3.5 H13 M4 9 H8 M4 12 H8" stroke="#e0e0e0" stroke-width="1.2"/><rect x="10" y="8.5" width="4" height="4" fill="#e0e0e0"/></svg>
<svg style="left:1594px;top:466px;" width="18" height="18" viewBox="0 0 18 18"><path d="M2 3 H16 V8 H14 V6 H4 V8 H2 Z" fill="#e0e0e0"/><rect x="4.5" y="8" width="9" height="8" fill="none" stroke="#e0e0e0" stroke-width="1.2"/><path d="M6 15 L9 11 L12 15 Z" fill="#e0e0e0"/></svg>
<svg style="left:1594px;top:494px;" width="18" height="18" viewBox="0 0 18 18"><rect x="5.5" y="2" width="11" height="10" fill="none" stroke="#e0e0e0" stroke-width="1.1"/><path d="M6.5 11.5 L10 6.5 L13 11.5Z" fill="#e0e0e0"/><path d="M3.5 4 V14 H14 M1.5 6 V16 H12" fill="none" stroke="#e0e0e0" stroke-width="1.1"/></svg>
<svg style="left:1594px;top:521px;" width="18" height="18" viewBox="0 0 18 18"><path d="M6 2 C4 6 2 8 2 11 C2 13.5 4 15 6 15 C8 15 10 13.5 10 11 C10 8 8 6 6 2Z" fill="#e0e0e0"/><circle cx="13" cy="4.5" r="2.3" fill="#e0e0e0"/><circle cx="12" cy="12" r="4" fill="#2c2c2c" stroke="#e0e0e0" stroke-width="1.2"/></svg>
<svg style="left:1594px;top:548px;" width="18" height="18" viewBox="0 0 18 18"><circle cx="9" cy="9" r="7" fill="none" stroke="#e06070" stroke-width="1.4"/><path d="M4 5 C7 6 6 9 9 9 C11 9 11 12 9 15 M12 3 C11 6 14 7 16 7" fill="none" stroke="#e06070" stroke-width="1.8"/></svg>
<svg style="left:1594px;top:587px;" width="18" height="18" viewBox="0 0 18 18"><path d="M2 5.5 V2 H5.5 M12.5 2 H16 V5.5 M16 12.5 V16 H12.5 M5.5 16 H2 V12.5" fill="none" stroke="#e59853" stroke-width="1.1"/><rect x="4.5" y="4.5" width="9" height="9" fill="#e59853"/></svg>
<svg style="left:1594px;top:614px;" width="18" height="18" viewBox="0 0 18 18"><path d="M3 15 L9 9" stroke="#6a9be6" stroke-width="2.8" stroke-linecap="round"/><path d="M8.3 9.7 C7 6.5 9.3 2.3 13.8 2.5 L11.2 5.4 L12.6 6.8 L15.5 4.2 C16 8.5 12.8 11 9.5 10" fill="#6a9be6" stroke="#6a9be6" stroke-width="1.6" stroke-linejoin="round"/></svg>
<svg style="left:1594px;top:642px;" width="18" height="18" viewBox="0 0 18 18"><circle cx="3.5" cy="3" r="2" fill="#6a9be6"/><circle cx="13" cy="9" r="2" fill="#6a9be6"/><circle cx="5" cy="15" r="2" fill="#6a9be6"/><circle cx="14" cy="15" r="2" fill="#6a9be6"/><path d="M3.5 3 L13 9 L5 15 M3.5 3 L14 15" stroke="#6a9be6" stroke-width="1.2" fill="none"/></svg>
<svg style="left:1594px;top:669px;" width="18" height="18" viewBox="0 0 18 18"><circle cx="9" cy="9" r="6.5" fill="none" stroke="#6a9be6" stroke-width="1.6"/><circle cx="9" cy="9" r="2.8" fill="#6a9be6"/><circle cx="14" cy="4" r="1.6" fill="#6a9be6"/></svg>
<svg style="left:1594px;top:697px;" width="18" height="18" viewBox="0 0 18 18"><ellipse cx="9" cy="10" rx="6.5" ry="5.5" fill="none" stroke="#6a9be6" stroke-width="1.6"/><circle cx="9" cy="10" r="2.2" fill="none" stroke="#6a9be6" stroke-width="1.4"/><path d="M14 2 L16 5 M3 14 L6 17" stroke="#6a9be6" stroke-width="1.4"/></svg>
<svg style="left:1594px;top:725px;" width="18" height="18" viewBox="0 0 18 18"><path d="M3 3.5 H15 L9 15 Z" fill="none" stroke="#2fc9a0" stroke-width="1.3"/><rect x="1.5" y="2" width="3" height="3" fill="#2c2c2c" stroke="#2fc9a0" stroke-width="1"/><rect x="13.5" y="2" width="3" height="3" fill="#2c2c2c" stroke="#2fc9a0" stroke-width="1"/><rect x="7.5" y="13.5" width="3" height="3" fill="#2c2c2c" stroke="#2fc9a0" stroke-width="1"/></svg>
<svg style="left:1594px;top:754px;" width="18" height="18" viewBox="0 0 18 18"><circle cx="9" cy="9" r="7" fill="#e06c7a"/><path d="M9 2 V9 H2 A7 7 0 0 1 9 2Z" fill="#2c2c2c" opacity="0"/><path d="M9 2 A7 7 0 0 1 16 9 H9 Z" fill="#2c2c2c"/><path d="M9 9 H2 A7 7 0 0 0 9 16 Z" fill="#2c2c2c"/></svg>
<svg style="left:1594px;top:790px;" width="18" height="18" viewBox="0 0 18 18"><rect x="2" y="2" width="14" height="14" fill="#e06c7a"/><path d="M4 4h2.8v2.8h-2.8zM9.6 4h2.8v2.8h-2.8zM6.8 6.8h2.8v2.8h-2.8zM12.4 6.8h2.8v2.8h-2.8zM4 9.6h2.8v2.8h-2.8zM9.6 9.6h2.8v2.8h-2.8zM6.8 12.4h2.8v2.8h-2.8z" fill="#2c2c2c"/></svg>
<div class="a" style="left:1616px;top:389.5px;width:303px;height:23.3px;background:#424242;"></div>
<div class="a" style="left:1616px;top:412.8px;width:303px;height:337px;background:#3d3d3d;"></div>
<svg style="left:1624px;top:397px;" width="9" height="8" viewBox="0 0 9 8"><path d="M0.5 0.5 H8.5 L4.5 7 Z" fill="#b0b0b0"/></svg>
<div class="t" style="left:1638.3px;top:395.13px;font-size:12px;line-height:15px;color:#e0e0e0;">Dimensions</div>
<svg style="left:1876px;top:395px;" width="16" height="14" viewBox="0 0 16 14"><circle cx="2" cy="2" r="1.6" fill="#ccc"/><circle cx="2" cy="7" r="1.6" fill="#ccc"/><circle cx="2" cy="12" r="1.6" fill="#ccc"/><path d="M5.5 2 H14 M5.5 7 H14 M5.5 12 H14" stroke="#ccc" stroke-width="1.2"/></svg>
<svg style="left:1901px;top:400px;" width="12" height="6" viewBox="0 0 12 6"><path d="M0 0h1.5v1.5h-1.5zM3 0h1.5v1.5h-1.5zM6 0h1.5v1.5h-1.5zM9 0h1.5v1.5h-1.5zM0 3h1.5v1.5h-1.5zM3 3h1.5v1.5h-1.5zM6 3h1.5v1.5h-1.5zM9 3h1.5v1.5h-1.5z" fill="#111"/></svg>
<div class="a" style="left:1768.9px;top:421.7px;width:142.19999999999982px;height:57.8px;background:#585858;border-radius:4px;"></div>
<div class="a" style="left:1768.9px;top:440.59999999999997px;width:142.19999999999982px;height:1px;background:#474747;"></div>
<div class="a" style="left:1768.9px;top:460.0px;width:142.19999999999982px;height:1px;background:#474747;"></div>
<div class="a" style="left:1768.9px;top:460.5px;width:70px;height:19.4px;background:#5680c2;border-radius:0 0 0 4px;"></div>
<div class="t" style="left:1599.2px;width:160px;text-align:right;top:424.20px;font-size:11.5px;line-height:14px;color:#d8d8d8;">Resolution X</div>
<div class="t" style="left:1800.0px;width:80px;text-align:center;top:424.20px;font-size:11.5px;line-height:14px;color:#e0e0e0;">1920 px</div>
<div class="t" style="left:1599.2px;width:160px;text-align:right;top:444.20px;font-size:11.5px;line-height:14px;color:#d8d8d8;">Y</div>
<div class="t" style="left:1800.0px;width:80px;text-align:center;top:444.20px;font-size:11.5px;line-height:14px;color:#e0e0e0;">1080 px</div>
<div class="t" style="left:1599.2px;width:160px;text-align:right;top:463.70px;font-size:11.5px;line-height:14px;color:#d8d8d8;">%</div>
<div class="t" style="left:1800.0px;width:80px;text-align:center;top:463.70px;font-size:11.5px;line-height:14px;color:#e0e0e0;">50%</div>
<div class="a" style="left:1768.9px;top:487.2px;width:142.19999999999982px;height:38.4px;background:#585858;border-radius:4px;"></div>
<div class="a" style="left:1768.9px;top:506.09999999999997px;width:142.19999999999982px;height:1px;background:#474747;"></div>
<div class="t" style="left:1599.2px;width:160px;text-align:right;top:489.50px;font-size:11.5px;line-height:14px;color:#d8d8d8;">Aspect X</div>
<div class="t" style="left:1800.0px;width:80px;text-align:center;top:489.50px;font-size:11.5px;line-height:14px;color:#e0e0e0;">1.000</div>
<div class="t" style="left:1599.2px;width:160px;text-align:right;top:509.20px;font-size:11.5px;line-height:14px;color:#d8d8d8;">Y</div>
<div class="t" style="left:1800.0px;width:80px;text-align:center;top:509.20px;font-size:11.5px;line-height:14px;color:#e0e0e0;">1.000</div>
<div class="t" style="left:1726.4px;width:160px;text-align:right;top:534.80px;font-size:11.5px;line-height:14px;color:#d8d8d8;">Render Region</div>
<div class="a" style="left:1896px;top:535.6px;width:12.3px;height:12px;background:#5680c2;border-radius:3px;"></div>
<svg style="left:1896px;top:535.6px;" width="13" height="12" viewBox="0 0 13 12"><path d="M2.8 6 L5.2 8.5 L10 3.3" fill="none" stroke="#fff" stroke-width="1.6"/></svg>
<div class="t" style="left:1726.4px;width:160px;text-align:right;top:554.80px;font-size:11.5px;line-height:14px;color:#d8d8d8;">Crop to Render Region</div>
<div class="a" style="left:1896px;top:555.6px;width:12.3px;height:12px;background:#5680c2;border-radius:3px;"></div>
<svg style="left:1896px;top:555.6px;" width="13" height="12" viewBox="0 0 13 12"><path d="M2.8 6 L5.2 8.5 L10 3.3" fill="none" stroke="#fff" stroke-width="1.6"/></svg>
<div class="a" style="left:1768.9px;top:577.2px;width:142.19999999999982px;height:57.8px;background:#585858;border-radius:4px;"></div>
<div class="a" style="left:1768.9px;top:596.1px;width:142.19999999999982px;height:1px;background:#474747;"></div>
<div class="a" style="left:1768.9px;top:615.5px;width:142.19999999999982px;height:1px;background:#474747;"></div>
<div class="t" style="left:1599.2px;width:160px;text-align:right;top:579.70px;font-size:11.5px;line-height:14px;color:#d8d8d8;">Frame Start</div>
<div class="t" style="left:1800.0px;width:80px;text-align:center;top:579.70px;font-size:11.5px;line-height:14px;color:#e0e0e0;">48</div>
<div class="t" style="left:1599.2px;width:160px;text-align:right;top:599.20px;font-size:11.5px;line-height:14px;color:#d8d8d8;">End</div>
<div class="t" style="left:1800.0px;width:80px;text-align:center;top:599.20px;font-size:11.5px;line-height:14px;color:#e0e0e0;">143</div>
<div class="t" style="left:1599.2px;width:160px;text-align:right;top:619.20px;font-size:11.5px;line-height:14px;color:#d8d8d8;">Step</div>
<div class="t" style="left:1800.0px;width:80px;text-align:center;top:619.20px;font-size:11.5px;line-height:14px;color:#e0e0e0;">1</div>
<div class="a" style="left:1773px;top:641.5px;width:138px;height:18.5px;background:#2a2a2a;border-radius:4px;"></div>
<div class="t" style="left:1595px;width:160px;text-align:right;top:645.00px;font-size:11.5px;line-height:14px;color:#d8d8d8;">Frame Rate</div>
<div class="t" style="left:1780.5px;top:645.00px;font-size:11.5px;line-height:14px;color:#e0e0e0;">24 fps</div>
<svg style="left:1898px;top:648px;" width="8" height="6" viewBox="0 0 8 6"><path d="M1 1.5 L4 4.5 L7 1.5" fill="none" stroke="#a0a0a0" stroke-width="1.4" stroke-linecap="round" stroke-linejoin="round"/></svg>
<svg style="left:1637px;top:677px;" width="9" height="8" viewBox="0 0 9 8"><path d="M0.5 0.5 H8.5 L4.5 7 Z" fill="#b0b0b0"/></svg>
<div class="t" style="left:1652.2px;top:675.00px;font-size:11.5px;line-height:14px;color:#d8d8d8;">Time Remapping</div>
<div class="a" style="left:1616px;top:692.8px;width:303px;height:55.5px;background:#393939;"></div>
<div class="a" style="left:1768.9px;top:701.7px;width:142.19999999999982px;height:38.4px;background:#585858;border-radius:4px;"></div>
<div class="a" style="left:1768.9px;top:720.6px;width:142.19999999999982px;height:1px;background:#474747;"></div>
<div class="t" style="left:1599.2px;width:160px;text-align:right;top:704.20px;font-size:11.5px;line-height:14px;color:#d8d8d8;">Old</div>
<div class="t" style="left:1800.0px;width:80px;text-align:center;top:704.20px;font-size:11.5px;line-height:14px;color:#e0e0e0;">100</div>
<div class="t" style="left:1599.2px;width:160px;text-align:right;top:724.20px;font-size:11.5px;line-height:14px;color:#d8d8d8;">New</div>
<div class="t" style="left:1800.0px;width:80px;text-align:center;top:724.20px;font-size:11.5px;line-height:14px;color:#e0e0e0;">100</div>
<div class="a" style="left:1616px;top:749.7px;width:303px;height:23.1px;background:#424242;"></div>
<div class="a" style="left:1616px;top:772.8px;width:303px;height:149px;background:#3d3d3d;"></div>
<svg style="left:1624px;top:757px;" width="9" height="8" viewBox="0 0 9 8"><path d="M0.5 0.5 H8.5 L4.5 7 Z" fill="#b0b0b0"/></svg>
<div class="t" style="left:1638.3px;top:755.93px;font-size:12px;line-height:15px;color:#e0e0e0;">Output</div>
<svg style="left:1901px;top:760px;" width="12" height="6" viewBox="0 0 12 6"><path d="M0 0h1.5v1.5h-1.5zM3 0h1.5v1.5h-1.5zM6 0h1.5v1.5h-1.5zM9 0h1.5v1.5h-1.5zM0 3h1.5v1.5h-1.5zM3 3h1.5v1.5h-1.5zM6 3h1.5v1.5h-1.5zM9 3h1.5v1.5h-1.5z" fill="#111"/></svg>
<div class="a" style="left:1625px;top:782.2px;width:266px;height:17.5px;background:#1d1d1d;border-radius:4px 0 0 4px;"></div>
<div class="t" style="left:1632.2px;top:784.40px;font-size:10.9px;line-height:14px;color:#e0e0e0;">C:\Users\Blender\Deskto...ogo anim\renders\Frames\</div>
<div class="a" style="left:1891px;top:782.2px;width:20px;height:17.5px;background:#595959;border-radius:0 4px 4px 0;"></div>
<svg style="left:1893px;top:783px;" width="16" height="16" viewBox="0 0 16 16"><path d="M1.5 3 H6 L7.5 5 H14.5 V14 H1.5 Z" fill="#e0e0e0"/><path d="M1.5 7 H14.5" stroke="#595959" stroke-width="1"/></svg>
<div class="t" style="left:1578.3px;width:160px;text-align:right;top:809.70px;font-size:11.5px;line-height:14px;color:#d8d8d8;">Overwrite</div>
<div class="a" style="left:1748px;top:810px;width:12.3px;height:12px;background:#5680c2;border-radius:3px;"></div>
<svg style="left:1748px;top:810px;" width="13" height="12" viewBox="0 0 13 12"><path d="M2.8 6 L5.2 8.5 L10 3.3" fill="none" stroke="#fff" stroke-width="1.6"/></svg>
<div class="t" style="left:1726.4px;width:160px;text-align:right;top:809.70px;font-size:11.5px;line-height:14px;color:#d8d8d8;">Placeholders</div>
<div class="a" style="left:1896px;top:810px;width:12.3px;height:12px;background:#5a5a5a;border-radius:3px;"></div>
<div class="t" style="left:1578.3px;width:160px;text-align:right;top:832.00px;font-size:11.5px;line-height:14px;color:#d8d8d8;">File Extensions</div>
<div class="a" style="left:1748px;top:832.3px;width:12.3px;height:12px;background:#5680c2;border-radius:3px;"></div>
<svg style="left:1748px;top:832.3px;" width="13" height="12" viewBox="0 0 13 12"><path d="M2.8 6 L5.2 8.5 L10 3.3" fill="none" stroke="#fff" stroke-width="1.6"/></svg>
<div class="t" style="left:1726.4px;width:160px;text-align:right;top:832.00px;font-size:11.5px;line-height:14px;color:#d8d8d8;">Cache Result</div>
<div class="a" style="left:1896px;top:832.3px;width:12.3px;height:12px;background:#5a5a5a;border-radius:3px;"></div>
<div class="a" style="left:1768.9px;top:853.9px;width:142.0999999999999px;height:18.100000000000023px;background:#2a2a2a;border-radius:4px;"></div>
<svg style="left:1771px;top:854px;" width="17" height="17" viewBox="0 0 17 17"><rect x="1.5" y="1.5" width="13" height="13" fill="none" stroke="#e0e0e0" stroke-width="1"/><path d="M2.5 14 L6.5 8 L10 14 Z" fill="#e0e0e0"/><circle cx="11" cy="5" r="1.5" fill="#e0e0e0"/></svg>
<div class="t" style="left:1599.2px;width:160px;text-align:right;top:856.40px;font-size:11.5px;line-height:14px;color:#d8d8d8;">File Format</div>
<div class="t" style="left:1793.9px;top:856.40px;font-size:11.5px;line-height:14px;color:#e0e0e0;">JPEG</div>
<svg style="left:1898px;top:860px;" width="8" height="6" viewBox="0 0 8 6"><path d="M1 1.5 L4 4.5 L7 1.5" fill="none" stroke="#a0a0a0" stroke-width="1.4" stroke-linecap="round" stroke-linejoin="round"/></svg>
<div class="a" style="left:1768.9px;top:876px;width:142.1px;height:18px;background:#545454;border-radius:4px;"></div>
<div class="a" style="left:1839.7px;top:876px;width:71.3px;height:18px;background:#5680c2;border-radius:0 4px 4px 0;"></div>
<div class="t" style="left:1599.2px;width:160px;text-align:right;top:877.80px;font-size:11.5px;line-height:14px;color:#d8d8d8;">Color</div>
<div class="t" style="left:1784.0px;width:40px;text-align:center;top:877.80px;font-size:11.5px;line-height:14px;color:#e0e0e0;">BW</div>
<div class="t" style="left:1855.0px;width:40px;text-align:center;top:877.80px;font-size:11.5px;line-height:14px;color:#fff;">RGB</div>
<div class="a" style="left:1768.9px;top:898.3px;width:142.1px;height:18.1px;background:#5680c2;border-radius:4px;"></div>
<div class="t" style="left:1599.2px;width:160px;text-align:right;top:900.00px;font-size:11.5px;line-height:14px;color:#d8d8d8;">Quality</div>
<div class="t" style="left:1800.0px;width:80px;text-align:center;top:900.00px;font-size:11.5px;line-height:14px;color:#fff;">100%</div>
<div class="a" style="left:1616px;top:925px;width:303px;height:23px;background:#424242;"></div>
<svg style="left:1625px;top:933px;" width="8" height="9" viewBox="0 0 8 9"><path d="M0.5 0.5 L7 4.5 L0.5 8.5 Z" fill="#b0b0b0"/></svg>
<div class="t" style="left:1638.3px;top:931.33px;font-size:12px;line-height:15px;color:#e0e0e0;">Metadata</div>
<svg style="left:1901px;top:936px;" width="12" height="6" viewBox="0 0 12 6"><path d="M0 0h1.5v1.5h-1.5zM3 0h1.5v1.5h-1.5zM6 0h1.5v1.5h-1.5zM9 0h1.5v1.5h-1.5zM0 3h1.5v1.5h-1.5zM3 3h1.5v1.5h-1.5zM6 3h1.5v1.5h-1.5zM9 3h1.5v1.5h-1.5z" fill="#111"/></svg>
<!-- sec_bottom -->
<div class="a" style="left:0px;top:1020.5px;width:1920px;height:19.5px;background:#2e2e2e;"></div>
<svg style="left:11.7px;top:1022px;" width="12" height="16" viewBox="0 0 12 16"><rect x="1" y="1" width="10" height="14" rx="4" fill="none" stroke="#bbb" stroke-width="1"/><path d="M1.5 6 V5 A4 4 0 0 1 5.5 1.5 V6 Z" fill="#bbb"/></svg>
<div class="t" style="left:34.2px;top:1022.90px;font-size:11.5px;line-height:14px;color:#bdbdbd;">Change Frame</div>
<svg style="left:248px;top:1022px;" width="12" height="16" viewBox="0 0 12 16"><rect x="1" y="1" width="10" height="14" rx="4" fill="none" stroke="#bbb" stroke-width="1"/><rect x="5" y="3" width="2" height="4" fill="#bbb"/></svg>
<div class="t" style="left:270.3px;top:1022.90px;font-size:11.5px;line-height:14px;color:#bdbdbd;">Pan View</div>
<svg style="left:484px;top:1022px;" width="12" height="16" viewBox="0 0 12 16"><rect x="1" y="1" width="10" height="14" rx="4" fill="none" stroke="#bbb" stroke-width="1"/><path d="M10.5 6 V5 A4 4 0 0 0 6.5 1.5 V6 Z" fill="#bbb"/></svg>
<div class="t" style="left:506px;top:1022.90px;font-size:11.5px;line-height:14px;color:#bdbdbd;">Sample Color</div>
<div class="t" style="left:1362.3px;top:1023.20px;font-size:11.5px;line-height:14px;color:#bdbdbd;">Collection | Plane | Verts:31,674 | Faces:31,312 | Tris:62,624 | Objects:1/7 | Mem: 116.5 MiB | v2.83.15</div>
<div class="a" style="left:0px;top:1040px;width:1920px;height:40px;background:#1f1f21;"></div>
<svg style="left:15px;top:1051px;" width="18" height="18" viewBox="0 0 18 18"><path d="M0.5 2.4 L7.3 1.5 V8.2 H0.5 Z M8.3 1.3 L17.5 0 V8.2 H8.3 Z M0.5 9.2 H7.3 V15.9 L0.5 15 Z M8.3 9.2 H17.5 V17.4 L8.3 16.1 Z" fill="#fff"/></svg>
<div class="a" style="left:48.3px;top:1040px;width:343.7px;height:40px;background:#f0f0f0;"></div>
<svg style="left:59px;top:1051px;" width="18" height="18" viewBox="0 0 18 18"><circle cx="11" cy="6.5" r="5.2" fill="none" stroke="#111" stroke-width="1.2"/><path d="M7.2 10.3 L1.5 16" stroke="#111" stroke-width="1.3"/></svg>
<div class="t" style="left:88.3px;top:1051.47px;font-size:14.6px;line-height:18px;color:#1a1a1a;">Taper ici pour rechercher</div>
<svg style="left:406px;top:1050px;" width="20" height="20" viewBox="0 0 20 20"><circle cx="10" cy="10" r="7.2" fill="none" stroke="#fff" stroke-width="2"/></svg>
<svg style="left:454px;top:1050px;" width="20" height="20" viewBox="0 0 20 20"><rect x="4.5" y="5.5" width="11" height="9" fill="none" stroke="#fff" stroke-width="1.3"/><path d="M2 3 H18 M2 17 H18 M18 5 V15" stroke="#fff" stroke-width="1.3"/></svg>
<svg style="left:503px;top:1048px;" width="24" height="24" viewBox="0 0 24 24"><path d="M1 5 H9 L11 7 H23 V20 H1 Z" fill="#e6b43c"/><path d="M1 9 H23 V20 H1 Z" fill="#f8d05a"/><rect x="7" y="13" width="10" height="5" fill="#2b7cd3"/><rect x="9.5" y="15" width="5" height="5" fill="#f8d05a"/></svg>
<div class="a" style="left:495px;top:1078px;width:40px;height:2px;background:#76b9ed;"></div>
<svg style="left:552px;top:1048px;" width="24" height="24" viewBox="0 0 24 24"><path d="M2.5 12 C2.5 5 8 1.5 13 1.5 C19 1.5 22 6 22 11 V13.5 H8.5 C8.8 17 11.5 18.5 14.5 18.5 C17 18.5 19.5 17.5 21 16.5 V20.5 C19 21.8 16.5 22.5 13.5 22.5 C7 22.5 2.5 18.5 2.5 12 Z M8.5 9.5 H16.5 C16.5 7 14.8 5.5 12.5 5.5 C10.5 5.5 8.8 7 8.5 9.5Z" fill="#1e88e5"/></svg>
<svg style="left:601px;top:1047px;" width="24" height="26" viewBox="0 0 24 26"><path d="M8 7 C8 2 16 2 16 7" fill="none" stroke="#fff" stroke-width="1.5"/><rect x="2" y="7" width="20" height="17" rx="1" fill="#fff"/><rect x="6.5" y="11" width="5" height="5" fill="#f25022"/><rect x="12.5" y="11" width="5" height="5" fill="#7fba00"/><rect x="6.5" y="17" width="5" height="5" fill="#00a4ef"/><rect x="12.5" y="17" width="5" height="5" fill="#ffb900"/></svg>
<svg style="left:649px;top:1048px;" width="26" height="24" viewBox="0 0 26 24"><path d="M1 8 L13 1 L25 8 V22 H1 Z" fill="#0f78d4"/><path d="M1 8 L13 16 L25 8 V22 H1 Z" fill="#49b0f0"/><path d="M1 22 L13 13 L25 22Z" fill="#2a92e6"/></svg>
<svg style="left:699px;top:1048px;" width="24" height="24" viewBox="0 0 24 24"><rect x="4" y="6" width="18" height="13" fill="#3a9a4a"/><rect x="9" y="9" width="7" height="6" fill="#ccc"/><path d="M1 2 H4 V22" fill="none" stroke="#aaa" stroke-width="1.5"/><path d="M6 19 V22 M10 19 V22 M14 19 V22 M18 19 V22" stroke="#d4a020" stroke-width="1.4"/></svg>
<svg style="left:748px;top:1047px;" width="26" height="26" viewBox="0 0 26 26"><defs><linearGradient id="ffg" x1="0" y1="0" x2="0" y2="1"><stop offset="0" stop-color="#ff9a2a"/><stop offset="0.6" stop-color="#ff5a3c"/><stop offset="1" stop-color="#e8247a"/></linearGradient></defs><circle cx="12" cy="14" r="10.3" fill="url(#ffg)"/><path d="M14 1 C19 4 23 9 22.5 15 C21 10 17 8 13.5 8 Z" fill="#ffd030"/><circle cx="12.5" cy="13.5" r="5.5" fill="#7a3fe0"/><path d="M2.5 10 C3 6 6 3.5 9 2.5 C7.5 5 8 7.5 10 9 C7 9 5 10 2.5 12 Z" fill="#ffb030"/></svg>
<div class="a" style="left:740px;top:1078px;width:40px;height:2px;background:#76b9ed;"></div>
<svg style="left:796px;top:1049px;" width="26" height="22" viewBox="0 0 26 22"><path d="M6 9 C9 6 14 5 18 7 L21 3 L22 8 C23 11 21 14 17 15 L12 16 C8 16 5 14 4 12 Z" fill="#7a6f5e"/><circle cx="10" cy="10" r="2.4" fill="#eee"/><circle cx="14.5" cy="9.5" r="2.4" fill="#eee"/><circle cx="10.3" cy="10.3" r="1" fill="#222"/><circle cx="14.8" cy="9.8" r="1" fill="#222"/><circle cx="3" cy="12" r="2" fill="#ddd"/><path d="M14 13 L22 19" stroke="#c0803a" stroke-width="1.6"/><path d="M20 17 L23 20" stroke="#ccc" stroke-width="1.8"/></svg>
<svg style="left:844px;top:1046px;" width="26" height="26" viewBox="0 0 26 26"><path d="M4 3 C4 2 5 1.5 6 1.5 H21 L24 4.5 V23 C24 24 23.5 24.5 22.5 24.5 H6 C5 24.5 4 24 4 23 Z" fill="#e8eef8" stroke="#7aa0d8" stroke-width="0.8"/><path d="M1.5 5 L16 3 V21 L1.5 19 Z" fill="#2f6cc4"/><path d="M12 9 H22 M12 12 H22 M12 15 H22 M6 18.5 H22" stroke="#3a6cc0" stroke-width="1.1"/><path d="M4 8 L5.6 15 L8 10 L10.4 15 L12 8" fill="none" stroke="#fff" stroke-width="1.4"/></svg>
<svg style="left:894px;top:1047px;" width="26" height="26" viewBox="0 0 26 26"><path d="M3 2 H15 L19 6 V24 H3 Z" fill="#e8e8e8" stroke="#999" stroke-width="1"/><path d="M5 8 H16 M5 11 H16 M5 14 H12" stroke="#888" stroke-width="1"/><path d="M14 12 C14 10 20 10 20 12 V15 H15 C13 15 12 16 12 18 V19 H10 C9 19 8.5 17 8.5 16 C8.5 14 10 13 12 13 H14Z" fill="#3b77a8"/><path d="M20 15 C22 15 23 16 23 18 C23 20 22 21 20 21 V23 C20 25 14 25 14 23 V21 H18 C19 21 20 20 20 19Z" fill="#f5d442"/></svg>
<svg style="left:0px;top:0px;" width="1920" height="1080" viewBox="0 0 1920 1080"><g transform="translate(0,0)"><g stroke="#ea7600" stroke-linecap="round" fill="none"><path d="M955.8 1051.5 L962.3 1055.7" stroke-width="2.9"/><path d="M948.4 1055.8 H957.5" stroke-width="2.9"/><path d="M945.6 1064.8 L953.3 1058.9" stroke-width="3"/><circle cx="959.2" cy="1061.2" r="5.7" stroke-width="2.9"/></g><circle cx="959.2" cy="1061.2" r="4.3" fill="#fff"/><circle cx="959.2" cy="1061.2" r="2.8" fill="#265787"/></g></svg>
<div class="a" style="left:981px;top:1040px;width:48px;height:40px;background:#4b4b4b;"></div>
<svg style="left:0px;top:0px;" width="1920" height="1080" viewBox="0 0 1920 1080"><g transform="translate(49,0)"><g stroke="#ea7600" stroke-linecap="round" fill="none"><path d="M955.8 1051.5 L962.3 1055.7" stroke-width="2.9"/><path d="M948.4 1055.8 H957.5" stroke-width="2.9"/><path d="M945.6 1064.8 L953.3 1058.9" stroke-width="3"/><circle cx="959.2" cy="1061.2" r="5.7" stroke-width="2.9"/></g><circle cx="959.2" cy="1061.2" r="4.3" fill="#fff"/><circle cx="959.2" cy="1061.2" r="2.8" fill="#265787"/></g></svg>
<div class="a" style="left:981px;top:1078px;width:48px;height:2px;background:#76b9ed;"></div>
<svg style="left:1681px;top:1053px;" width="16" height="14" viewBox="0 0 16 14"><path d="M2 10 L8 4 L14 10" fill="none" stroke="#fff" stroke-width="1.3"/></svg>
<svg style="left:1703px;top:1050px;" width="20" height="20" viewBox="0 0 20 20"><rect x="4.5" y="4.5" width="13" height="9" fill="none" stroke="#fff" stroke-width="1.2"/><path d="M11 13.5 V17 M7 17.5 H15 M1.5 3 H6 V10 H1.5 Z" fill="none" stroke="#fff" stroke-width="1.1"/></svg>
<svg style="left:1727px;top:1050px;" width="20" height="20" viewBox="0 0 20 20"><path d="M5.5 3 L10 6 L5.5 9 L1 6 Z M14.5 3 L19 6 L14.5 9 L10 6 Z M5.5 9 L10 12 L5.5 15 L1 12 Z M14.5 9 L19 12 L14.5 15 L10 12 Z M10 13 L14 15.5 L10 18 L6 15.5 Z" fill="#fff"/></svg>
<svg style="left:1750px;top:1050px;" width="22" height="20" viewBox="0 0 22 20"><path d="M3 14 C0 14 0 9 4 9 C4 5 10 4 11 8 C15 7 17 10 16 13 Z" fill="#ddd"/><circle cx="16" cy="14" r="4.5" fill="#777"/><path d="M14.8 12 V16 M17.2 12 V16" stroke="#fff" stroke-width="1.1"/></svg>
<svg style="left:1774px;top:1050px;" width="20" height="20" viewBox="0 0 20 20"><path d="M2 7 H5 L9.5 3 V17 L5 13 H2 Z" fill="none" stroke="#fff" stroke-width="1.1"/><path d="M12 7.5 C13 9 13 11 12 12.5 M14 5.5 C16 8 16 12 14 14.5 M16 3.5 C19 7 19 13 16 16.5" fill="none" stroke="#fff" stroke-width="1.1"/></svg>
<div class="t" style="left:1791.7px;width:80px;text-align:center;top:1043.53px;font-size:12px;line-height:15px;color:#fff;">12:25</div>
<div class="t" style="left:1791.7px;width:80px;text-align:center;top:1061.83px;font-size:12px;line-height:15px;color:#fff;">08/05/2020</div>
<svg style="left:1878px;top:1050px;" width="22" height="22" viewBox="0 0 22 22"><path d="M2 2 H17 V13 H8 L4 16 V13 H2 Z" fill="#fff"/><path d="M5 5.5 H14 M5 8 H14 M5 10.5 H11" stroke="#1f1f21" stroke-width="1"/><circle cx="15.5" cy="16" r="5.5" fill="#1f1f21" stroke="#ccc" stroke-width="1"/><path d="M14.5 13.5 L16 12.5 V19.5" fill="none" stroke="#fff" stroke-width="1.3"/></svg>
<div class="a" style="left:1915px;top:1040px;width:1px;height:40px;background:#555;"></div>
</div></body></html>
